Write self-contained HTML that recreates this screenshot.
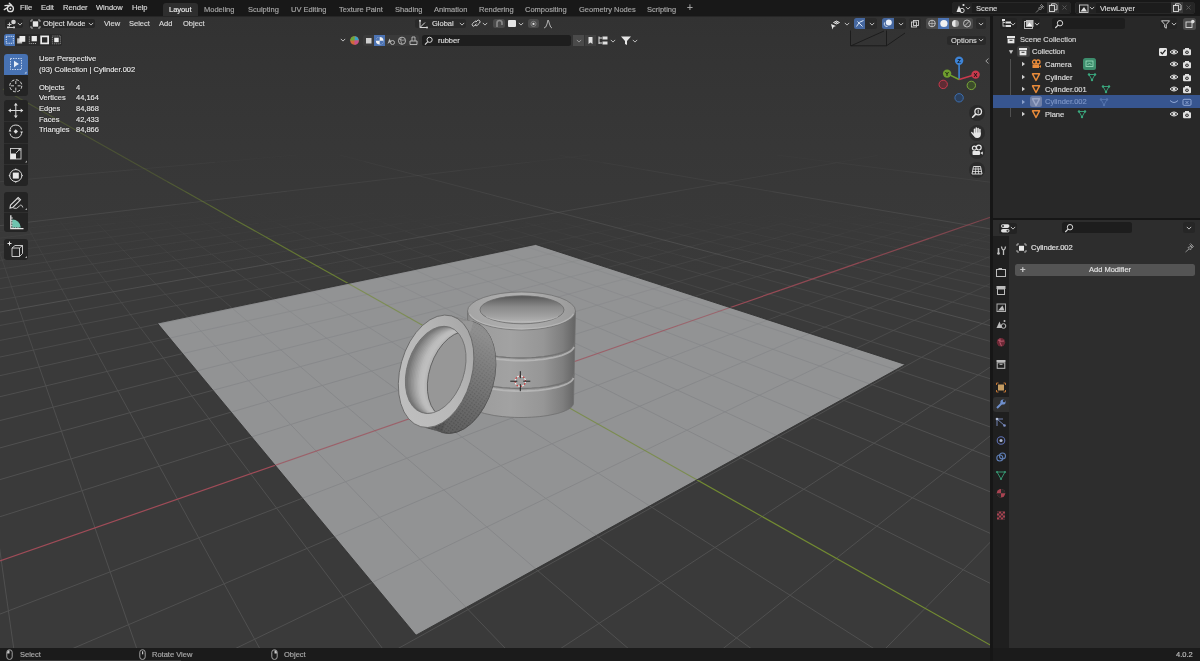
<!DOCTYPE html>
<html><head><meta charset="utf-8">
<style>
*{margin:0;padding:0;box-sizing:border-box}
html,body{width:1200px;height:661px;overflow:hidden;background:#161616;font-family:"Liberation Sans",sans-serif;color:#d6d6d6}
.a{position:absolute}
.t{position:absolute;font-size:7.5px;line-height:10px;white-space:nowrap;-webkit-text-stroke:0.18px currentColor;will-change:transform}
#topbar{left:0;top:0;width:1200px;height:15px;background:#181818}
#vp{left:0;top:15px;width:990px;height:633px;background:linear-gradient(#323232 0px,#343434 50px,#373737 130px,#3a3a3a 260px);overflow:hidden}
#outl{left:993px;top:15px;width:207px;height:203px;background:#282828}
#props{left:993px;top:220px;width:207px;height:428px;background:#2b2b2b}
#status{left:0;top:648px;width:1200px;height:13px;background:#181818}
</style></head><body>
<div class="a" id="vp">
<svg width="990" height="633" viewBox="0 15 990 633" style="position:absolute;left:0;top:0">
<defs><clipPath id="pc"><polygon points="157.3,323.1 535.6,244.4 905.4,364.5 416.0,635.2"/></clipPath></defs>
<g stroke-width="1" fill="none">
<path d="M25.2 222.6L19.6 212.5M60.0 221.3L54.3 213.7M96.8 222.6L87.1 212.5M131.1 221.2L122.3 213.7M168.5 222.6L157.9 214.9M202.1 221.2L190.2 213.6M278.4 223.9L258.1 213.6M311.5 222.5L294.7 214.8M350.4 223.9L326.0 213.6M382.9 222.5L363.0 214.8M422.4 223.8L393.7 213.6M454.3 222.5L431.2 214.8M494.2 223.8L461.5 213.6M525.5 222.5L499.4 214.8M566.0 223.8L529.1 213.6M637.8 223.8L596.7 213.6M667.9 222.4L635.6 214.8M709.4 223.8L664.3 213.6M739.0 222.4L703.6 214.8M781.0 223.8L731.7 213.5M810.0 222.4L771.5 214.8M852.6 223.7L799.2 213.5M881.0 222.4L839.4 214.7M924.0 223.7L866.5 213.5M995.4 223.7L933.8 213.5M1006.3 219.7L975.0 214.7M924.0 223.7L954.3 214.1M881.0 222.4L907.2 214.7M831.2 223.1L866.5 213.5M781.0 223.8L819.2 214.1M739.0 222.4L771.5 214.8M688.6 223.1L731.7 213.5M637.8 223.8L683.9 214.2M596.8 222.5L635.6 214.8M545.7 223.1L596.7 213.6M454.3 222.5L499.4 214.8M402.6 223.2L461.5 213.6M363.4 221.8L412.4 214.2M311.5 222.5L375.2 213.0M259.1 223.2L326.0 213.6M221.0 221.9L276.4 214.2M168.5 222.6L240.0 213.0M115.5 223.2L190.2 213.6M78.4 221.9L140.0 214.3M-11.2 221.3L54.3 213.7M-12.9 216.1L3.5 214.3" stroke="#505050" stroke-opacity="0.08"/>
<path d="M-7.3 232.5L-10.2 224.0M29.8 231.0L25.2 222.6M68.5 232.5L60.0 221.3M104.9 231.0L96.8 222.6M144.2 232.5L131.1 221.2M180.0 231.0L168.5 222.6M219.8 232.5L202.1 221.2M295.4 232.4L278.4 223.9M329.9 230.9L311.5 222.5M370.8 232.4L350.4 223.9M404.7 230.9L382.9 222.5M446.2 232.4L422.4 223.8M488.4 233.9L454.3 222.5M521.6 232.4L494.2 223.8M564.3 233.9L525.5 222.5M596.8 232.3L566.0 223.8M672.0 232.3L637.8 223.8M715.9 233.8L667.9 222.4M747.1 232.3L709.4 223.8M791.6 233.8L739.0 222.4M822.1 232.3L781.0 223.8M867.2 233.8L810.0 222.4M897.1 232.3L852.6 223.7M942.7 233.7L881.0 222.4M972.0 232.2L924.0 223.7M1012.0 226.5L995.4 223.7M995.0 233.0L1000.8 230.7M897.1 232.3L924.0 223.7M844.6 233.0L881.0 222.4M791.6 233.8L831.2 223.1M747.1 232.3L781.0 223.8M693.9 233.1L739.0 222.4M650.3 231.6L688.6 223.1M596.8 232.3L637.8 223.8M542.9 233.1L596.8 222.5M500.4 231.6L545.7 223.1M391.6 233.2L454.3 222.5M350.3 231.7L402.6 223.2M295.4 232.4L363.4 221.8M240.0 233.2L311.5 222.5M199.8 231.7L259.1 223.2M144.2 232.5L221.0 221.9M104.9 231.0L168.5 222.6M49.1 231.8L115.5 223.2M-7.3 232.5L78.4 221.9" stroke="#505050" stroke-opacity="0.17"/>
<path d="M-4.0 242.0L-7.3 232.5M36.7 243.6L29.8 231.0M75.6 241.9L68.5 232.5M117.0 243.6L104.9 231.0M155.2 241.9L144.2 232.5M197.2 243.6L180.0 231.0M234.6 241.9L219.8 232.5M314.0 241.9L295.4 232.4M357.3 243.5L329.9 230.9M393.3 241.8L370.8 232.4M437.3 243.5L404.7 230.9M472.5 241.8L446.2 232.4M517.1 243.5L488.4 233.9M551.7 241.8L521.6 232.4M596.9 243.4L564.3 233.9M642.8 245.1L596.8 232.3M723.2 245.1L672.0 232.3M756.2 243.4L715.9 233.8M803.4 245.0L747.1 232.3M835.7 243.3L791.6 233.8M883.6 245.0L822.1 232.3M915.2 243.3L867.2 233.8M963.7 245.0L897.1 232.3M994.5 243.3L942.7 233.7M1006.6 238.4L972.0 232.2M963.7 245.0L995.0 233.0M859.5 244.2L897.1 232.3M812.1 242.5L844.6 233.0M756.2 243.4L791.6 233.8M699.8 244.2L747.1 232.3M653.6 242.6L693.9 233.1M596.9 243.4L650.3 231.6M539.7 244.3L596.8 232.3M494.7 242.6L542.9 233.1M437.3 243.5L500.4 231.6M335.6 242.7L391.6 233.2M277.3 243.5L350.3 231.7M234.6 241.9L295.4 232.4M176.1 242.7L240.0 233.2M117.0 243.6L199.8 231.7M75.6 241.9L144.2 232.5M16.3 242.8L104.9 231.0M-24.1 241.2L49.1 231.8M-25.7 234.8L-7.3 232.5" stroke="#505050" stroke-opacity="0.25"/>
<path d="M0.9 256.2L-4.0 242.0M42.6 254.3L36.7 243.6M86.3 256.1L75.6 241.9M127.2 254.2L117.0 243.6M171.7 256.1L155.2 241.9M211.7 254.2L197.2 243.6M256.9 256.1L234.6 241.9M342.1 256.0L314.0 241.9M380.5 254.1L357.3 243.5M427.1 256.0L393.3 241.8M464.7 254.1L437.3 243.5M512.1 256.0L472.5 241.8M548.9 254.1L517.1 243.5M597.0 255.9L551.7 241.8M633.0 254.0L596.9 243.4M681.7 255.9L642.8 245.1M766.4 255.8L723.2 245.1M816.8 257.7L756.2 243.4M851.0 255.8L803.4 245.0M902.1 257.7L835.7 243.3M935.5 255.8L883.6 245.0M987.3 257.6L915.2 243.3M1000.5 252.0L963.7 245.0M1013.0 246.7L994.5 243.3M994.0 254.8L1000.5 252.0M935.5 255.8L963.7 245.0M825.8 254.9L859.5 244.2M766.4 255.8L812.1 242.5M706.4 256.8L756.2 243.4M657.2 254.9L699.8 244.2M597.0 255.9L653.6 242.6M536.1 256.9L596.9 243.4M488.3 255.0L539.7 244.3M427.1 256.0L494.7 242.6M380.5 254.1L437.3 243.5M256.9 256.1L335.6 242.7M211.7 254.2L277.3 243.5M149.4 255.2L234.6 241.9M86.3 256.1L176.1 242.7M42.6 254.3L117.0 243.6M-20.7 255.2L75.6 241.9M-22.5 248.0L16.3 242.8" stroke="#505050" stroke-opacity="0.33"/>
<path d="M5.1 268.3L0.9 256.2M51.5 270.4L42.6 254.3M95.5 268.2L86.3 256.1M142.7 270.4L127.2 254.2M185.7 268.2L171.7 256.1M233.8 270.3L211.7 254.2M275.9 268.1L256.9 256.1M365.9 268.1L342.1 256.0M415.6 270.2L380.5 254.1M455.9 268.0L427.1 256.0M506.4 270.2L464.7 254.1M545.7 268.0L512.1 256.0M597.0 270.1L548.9 254.1M635.5 267.9L597.0 255.9M687.6 270.1L633.0 254.0M725.1 267.9L681.7 255.9M814.6 267.8L766.4 255.8M868.4 270.0L816.8 257.7M904.1 267.8L851.0 255.8M958.6 269.9L902.1 257.7M993.4 267.8L935.5 255.8M1007.0 261.6L987.3 257.6M958.6 269.9L994.0 254.8M895.6 271.0L935.5 255.8M778.0 270.0L825.8 254.9M714.0 271.1L766.4 255.8M661.4 269.0L706.4 256.8M597.0 270.1L657.2 254.9M545.7 268.0L597.0 255.9M481.0 269.1L536.1 256.9M415.6 270.2L488.3 255.0M365.9 268.1L427.1 256.0M300.2 269.2L380.5 254.1M185.7 268.2L256.9 256.1M119.0 269.3L211.7 254.2M51.5 270.4L149.4 255.2M5.1 268.3L86.3 256.1M-18.8 263.1L42.6 254.3" stroke="#505050" stroke-opacity="0.42"/>
<path d="M11.5 286.8L5.1 268.3M59.1 284.3L51.5 270.4M109.4 286.7L95.5 268.2M155.9 284.2L142.7 270.4M207.2 286.6L185.7 268.2M252.7 284.1L233.8 270.3M304.9 286.6L275.9 268.1M402.4 286.5L365.9 268.1M445.7 284.0L415.6 270.2M499.8 286.4L455.9 268.0M542.1 283.9L506.4 270.2M597.1 286.4L545.7 268.0M638.3 283.9L597.0 270.1M694.3 286.3L635.5 267.9M734.5 283.8L687.6 270.1M791.4 286.3L725.1 267.9M888.3 286.2L814.6 267.8M926.3 283.7L868.4 270.0M985.1 286.1L904.1 267.8M1000.1 278.9L958.6 269.9M1014.2 272.1L993.4 267.8M985.1 286.1L1000.1 278.9M917.6 287.4L958.6 269.9M859.2 285.0L895.6 271.0M734.5 283.8L778.0 270.0M666.2 285.1L714.0 271.1M597.1 286.4L661.4 269.0M542.1 283.9L597.0 270.1M472.6 285.2L545.7 268.0M402.4 286.5L481.0 269.1M349.3 284.1L415.6 270.2M278.6 285.3L365.9 268.1M207.2 286.6L300.2 269.2M84.1 285.5L185.7 268.2M34.3 283.0L119.0 269.3M-14.5 280.7L51.5 270.4M-16.7 271.5L5.1 268.3" stroke="#505050" stroke-opacity="0.50"/>
<path d="M17.1 302.8L11.5 286.8M70.9 305.6L59.1 284.3M121.5 302.7L109.4 286.7M176.4 305.5L155.9 284.2M225.8 302.6L207.2 286.6M281.8 305.5L252.7 284.1M330.0 302.6L304.9 286.6M434.0 302.5L402.4 286.5M492.2 305.3L445.7 284.0M537.9 302.4L499.8 286.4M597.2 305.2L542.1 283.9M641.7 302.3L597.1 286.4M702.1 305.1L638.3 283.9M745.3 302.2L694.3 286.3M806.8 305.1L734.5 283.8M848.8 302.2L791.4 286.3M952.1 302.1L888.3 286.2M1015.8 304.9L926.3 283.7M1007.5 291.2L985.1 286.1M952.1 302.1L985.1 286.1M879.9 303.6L917.6 287.4M806.8 305.1L859.2 285.0M671.7 303.7L734.5 283.8M597.2 305.2L666.2 285.1M537.9 302.4L597.1 286.4M463.0 303.9L542.1 283.9M387.1 305.4L472.6 285.2M330.0 302.6L402.4 286.5M253.7 304.0L349.3 284.1M198.2 301.2L278.6 285.3M121.5 302.7L207.2 286.6M-9.4 301.4L84.1 285.5M-12.1 290.6L34.3 283.0" stroke="#505050" stroke-opacity="0.58"/>
<path d="M25.7 327.8L17.1 302.8M81.2 324.4L70.9 305.6M140.4 327.7L121.5 302.7M194.4 324.3L176.4 305.5M254.9 327.6L225.8 302.6M307.4 324.2L281.8 305.5M369.2 327.5L330.0 302.6M483.4 327.4L434.0 302.5M533.0 324.0L492.2 305.3M597.4 327.3L537.9 302.4M645.5 323.9L597.2 305.2M711.2 327.2L641.7 302.3M757.9 323.8L702.1 305.1M824.8 327.1L745.3 302.2M870.1 323.7L806.8 305.1M938.3 327.0L848.8 302.2M1025.0 320.2L952.1 302.1M982.2 323.6L1007.8 309.3M904.0 325.3L952.1 302.1M824.8 327.1L879.9 303.6M757.9 323.8L806.8 305.1M597.4 327.3L671.7 303.7M533.0 324.0L597.2 305.2M451.6 325.7L537.9 302.4M389.3 322.4L463.0 303.9M307.4 324.2L387.1 305.4M224.5 325.9L330.0 302.6M164.7 322.6L253.7 304.0M81.2 324.4L198.2 301.2M-3.4 326.1L121.5 302.7M-34.8 305.7L-9.4 301.4" stroke="#505050" stroke-opacity="0.67"/>
<path d="M33.4 350.1L25.7 327.8M93.1 346.0L81.2 324.4M157.2 349.9L140.4 327.7M215.2 345.9L194.4 324.3M280.7 349.8L254.9 327.6M347.9 353.8L307.4 324.2M404.0 349.7L369.2 327.5M527.2 349.5L483.4 327.4M597.5 353.5L533.0 324.0M650.2 349.4L597.4 327.3M722.0 353.4L645.5 323.9M772.9 349.3L711.2 327.2M846.3 353.2L757.9 323.8M895.5 349.2L824.8 327.1M970.4 353.1L870.1 323.7M1017.9 349.0L938.3 327.0M932.7 351.1L982.2 323.6M846.3 353.2L904.0 325.3M772.9 349.3L824.8 327.1M685.8 351.4L757.9 323.8M527.2 349.5L597.4 327.3M438.2 351.6L533.0 324.0M370.3 347.7L451.6 325.7M280.7 349.8L389.3 322.4M189.8 351.9L307.4 324.2M124.9 348.0L224.5 325.9M33.4 350.1L164.7 322.6M-29.1 346.2L81.2 324.4M-31.2 331.3L-3.4 326.1" stroke="#505050" stroke-opacity="0.75"/>
<path d="M42.4 376.1L33.4 350.1M112.3 380.8L93.1 346.0M176.8 376.0L157.2 349.9M248.5 380.7L215.2 345.9M311.0 375.8L280.7 349.8M384.5 380.5L347.9 353.8M444.9 375.6L404.0 349.7M597.7 385.1L527.2 349.5M655.7 380.2L597.5 353.5M735.0 385.0L650.2 349.4M791.0 380.0L722.0 353.4M872.2 384.8L772.9 349.3M926.0 379.8L846.3 353.2M1009.0 384.6L895.5 349.2M1028.9 370.3L970.4 353.1M967.2 382.2L1008.5 355.1M885.3 377.5L932.7 351.1M791.0 380.0L846.3 353.2M695.1 382.5L772.9 349.3M616.9 377.8L685.8 351.4M422.0 382.9L527.2 349.5M347.5 378.1L438.2 351.6M248.5 380.7L370.3 347.7M148.0 383.2L280.7 349.8M77.1 378.5L189.8 351.9M-24.2 381.0L124.9 348.0M-26.8 362.6L33.4 350.1" stroke="#505050" stroke-opacity="0.83"/>
<path d="M57.2 418.8L42.4 376.1M129.9 412.7L112.3 380.8M209.0 418.6L176.8 376.0M279.1 412.5L248.5 380.7M360.4 418.3L311.0 375.8M428.0 412.3L384.5 380.5M511.6 418.1L444.9 375.6M662.5 417.9L597.7 385.1M725.0 411.9L655.7 380.2M813.1 417.7L735.0 385.0M904.0 423.6L791.0 380.0M963.4 417.4L872.2 384.8M1020.8 411.5L926.0 379.8M917.9 414.5L967.2 382.2M813.1 417.7L885.3 377.5M706.4 420.8L791.0 380.0M619.2 415.0L695.1 382.5M511.6 418.1L616.9 377.8M319.4 415.4L422.0 382.9M209.0 418.6L347.5 378.1M129.9 412.7L248.5 380.7M18.5 415.9L148.0 383.2M-21.2 401.7L77.1 378.5" stroke="#505050" stroke-opacity="0.92"/>
<path d="M17.1 672.3L-12.0 466.5M150.9 689.4L57.2 418.8M272.4 671.5L129.9 412.7M412.8 688.6L209.0 418.6M526.8 670.7L279.1 412.5M673.9 687.7L360.4 418.3M780.3 669.9L428.0 412.3M934.1 686.9L511.6 418.1M1012.4 594.6L662.5 417.9M1043.7 557.9L725.0 411.9M1025.3 506.6L813.1 417.7M1010.3 464.7L904.0 423.6M1034.7 442.9L963.4 417.4M856.2 678.3L1011.2 520.9M706.5 661.8L1009.6 420.4M526.8 670.7L917.9 414.5M341.7 679.9L813.1 417.7M204.9 663.3L706.4 420.8M17.1 672.3L619.2 415.0M-48.4 632.6L511.6 418.1M-52.3 533.3L319.4 415.4M-53.8 495.3L209.0 418.6M-14.1 451.7L129.9 412.7M-17.9 425.0L18.5 415.9" stroke="#505050" stroke-opacity="1.00"/>
<path d="M364.3 161.5L339.8 155.0M603.1 162.7L558.9 155.1M836.8 162.7L777.4 155.1M1005.3 156.2L995.3 155.2M836.8 162.7L877.7 155.4M529.8 162.1L590.2 154.8M215.2 162.3L295.9 155.0M-11.5 156.0L9.6 154.5" stroke="#565656" stroke-opacity="0.08"/>
<path d="M396.9 170.0L364.3 161.5M646.3 170.0L603.1 162.7M905.3 171.4L836.8 162.7M790.0 171.1L836.8 162.7M460.7 170.4L529.8 162.1M133.6 169.7L215.2 162.3" stroke="#565656" stroke-opacity="0.17"/>
<path d="M434.7 180.0L396.9 170.0M704.2 180.0L646.3 170.0M972.7 180.0L905.3 171.4M735.7 180.7L790.0 171.1M380.7 179.9L460.7 170.4M28.2 179.2L133.6 169.7" stroke="#565656" stroke-opacity="0.25"/>
<path d="M479.3 191.6L434.7 180.0M772.3 191.6L704.2 180.0M1010.0 184.7L972.7 180.0M679.8 190.7L735.7 180.7M287.1 191.2L380.7 179.9M-10.7 182.7L28.2 179.2" stroke="#565656" stroke-opacity="0.33"/>
<path d="M532.3 205.6L479.3 191.6M853.4 205.5L772.3 191.6M605.8 203.9L679.8 190.7M175.9 204.5L287.1 191.2" stroke="#565656" stroke-opacity="0.42"/>
<path d="M586.7 219.8L532.3 205.6M936.6 219.7L853.4 205.5M516.6 219.8L605.8 203.9M41.8 220.6L175.9 204.5" stroke="#565656" stroke-opacity="0.50"/>
<path d="M664.0 240.1L586.7 219.8M1000.8 230.7L936.6 219.7M407.1 239.4L516.6 219.8M-27.1 228.9L41.8 220.6" stroke="#565656" stroke-opacity="0.58"/>
<path d="M761.9 265.8L664.0 240.1M269.3 264.0L407.1 239.4" stroke="#565656" stroke-opacity="0.67"/>
<path d="M889.8 299.3L761.9 265.8M90.9 295.8L269.3 264.0" stroke="#565656" stroke-opacity="0.75"/>
<path d="M1008.1 330.4L889.8 299.3M-33.1 317.9L90.9 295.8" stroke="#565656" stroke-opacity="0.83"/>
</g>
<g stroke-width="1.2" fill="none">
<path d="M-50.5 578.3L678.2 325.5" stroke="#a04c58" stroke-opacity="1.00"/>
<path d="M678.2 325.5L780.4 290.1" stroke="#a04c58" stroke-opacity="0.92"/>
<path d="M780.4 290.1L859.4 262.6" stroke="#a04c58" stroke-opacity="0.83"/>
<path d="M859.4 262.6L929.3 238.4" stroke="#a04c58" stroke-opacity="0.75"/>
<path d="M929.3 238.4L979.3 221.0" stroke="#a04c58" stroke-opacity="0.67"/>
<path d="M979.3 221.0L1001.1 213.5" stroke="#a04c58" stroke-opacity="0.58"/>
<path d="M1033.1 669.1L420.3 324.1" stroke="#728a32" stroke-opacity="1.00"/>
<path d="M420.3 324.1L358.1 289.1" stroke="#728a32" stroke-opacity="0.92"/>
<path d="M358.1 289.1L309.9 261.9" stroke="#728a32" stroke-opacity="0.83"/>
<path d="M309.9 261.9L265.8 237.0" stroke="#728a32" stroke-opacity="0.75"/>
<path d="M265.8 237.0L235.3 219.9" stroke="#728a32" stroke-opacity="0.67"/>
<path d="M235.3 219.9L209.9 205.6" stroke="#728a32" stroke-opacity="0.58"/>
<path d="M209.9 205.6L185.1 191.6" stroke="#728a32" stroke-opacity="0.50"/>
<path d="M185.1 191.6L167.1 181.5" stroke="#728a32" stroke-opacity="0.42"/>
<path d="M167.1 181.5L2.8 89.0" stroke="#728a32" stroke-opacity="0.33"/>
</g>
<polygon points="157.3,323.1 535.6,244.4 905.4,364.5 416.0,635.2" fill="#929394"/>
<g stroke-width="1" fill="none" clip-path="url(#pc)">
<path d="M25.2 222.6L19.6 212.5M60.0 221.3L54.3 213.7M96.8 222.6L87.1 212.5M131.1 221.2L122.3 213.7M168.5 222.6L157.9 214.9M202.1 221.2L190.2 213.6M278.4 223.9L258.1 213.6M311.5 222.5L294.7 214.8M350.4 223.9L326.0 213.6M382.9 222.5L363.0 214.8M422.4 223.8L393.7 213.6M454.3 222.5L431.2 214.8M494.2 223.8L461.5 213.6M525.5 222.5L499.4 214.8M566.0 223.8L529.1 213.6M637.8 223.8L596.7 213.6M667.9 222.4L635.6 214.8M709.4 223.8L664.3 213.6M739.0 222.4L703.6 214.8M781.0 223.8L731.7 213.5M810.0 222.4L771.5 214.8M852.6 223.7L799.2 213.5M881.0 222.4L839.4 214.7M924.0 223.7L866.5 213.5M995.4 223.7L933.8 213.5M1006.3 219.7L975.0 214.7M924.0 223.7L954.3 214.1M881.0 222.4L907.2 214.7M831.2 223.1L866.5 213.5M781.0 223.8L819.2 214.1M739.0 222.4L771.5 214.8M688.6 223.1L731.7 213.5M637.8 223.8L683.9 214.2M596.8 222.5L635.6 214.8M545.7 223.1L596.7 213.6M454.3 222.5L499.4 214.8M402.6 223.2L461.5 213.6M363.4 221.8L412.4 214.2M311.5 222.5L375.2 213.0M259.1 223.2L326.0 213.6M221.0 221.9L276.4 214.2M168.5 222.6L240.0 213.0M115.5 223.2L190.2 213.6M78.4 221.9L140.0 214.3M-11.2 221.3L54.3 213.7M-12.9 216.1L3.5 214.3" stroke="#868789" stroke-opacity="0.08"/>
<path d="M-7.3 232.5L-10.2 224.0M29.8 231.0L25.2 222.6M68.5 232.5L60.0 221.3M104.9 231.0L96.8 222.6M144.2 232.5L131.1 221.2M180.0 231.0L168.5 222.6M219.8 232.5L202.1 221.2M295.4 232.4L278.4 223.9M329.9 230.9L311.5 222.5M370.8 232.4L350.4 223.9M404.7 230.9L382.9 222.5M446.2 232.4L422.4 223.8M488.4 233.9L454.3 222.5M521.6 232.4L494.2 223.8M564.3 233.9L525.5 222.5M596.8 232.3L566.0 223.8M672.0 232.3L637.8 223.8M715.9 233.8L667.9 222.4M747.1 232.3L709.4 223.8M791.6 233.8L739.0 222.4M822.1 232.3L781.0 223.8M867.2 233.8L810.0 222.4M897.1 232.3L852.6 223.7M942.7 233.7L881.0 222.4M972.0 232.2L924.0 223.7M1012.0 226.5L995.4 223.7M995.0 233.0L1000.8 230.7M897.1 232.3L924.0 223.7M844.6 233.0L881.0 222.4M791.6 233.8L831.2 223.1M747.1 232.3L781.0 223.8M693.9 233.1L739.0 222.4M650.3 231.6L688.6 223.1M596.8 232.3L637.8 223.8M542.9 233.1L596.8 222.5M500.4 231.6L545.7 223.1M391.6 233.2L454.3 222.5M350.3 231.7L402.6 223.2M295.4 232.4L363.4 221.8M240.0 233.2L311.5 222.5M199.8 231.7L259.1 223.2M144.2 232.5L221.0 221.9M104.9 231.0L168.5 222.6M49.1 231.8L115.5 223.2M-7.3 232.5L78.4 221.9" stroke="#868789" stroke-opacity="0.17"/>
<path d="M-4.0 242.0L-7.3 232.5M36.7 243.6L29.8 231.0M75.6 241.9L68.5 232.5M117.0 243.6L104.9 231.0M155.2 241.9L144.2 232.5M197.2 243.6L180.0 231.0M234.6 241.9L219.8 232.5M314.0 241.9L295.4 232.4M357.3 243.5L329.9 230.9M393.3 241.8L370.8 232.4M437.3 243.5L404.7 230.9M472.5 241.8L446.2 232.4M517.1 243.5L488.4 233.9M551.7 241.8L521.6 232.4M596.9 243.4L564.3 233.9M642.8 245.1L596.8 232.3M723.2 245.1L672.0 232.3M756.2 243.4L715.9 233.8M803.4 245.0L747.1 232.3M835.7 243.3L791.6 233.8M883.6 245.0L822.1 232.3M915.2 243.3L867.2 233.8M963.7 245.0L897.1 232.3M994.5 243.3L942.7 233.7M1006.6 238.4L972.0 232.2M963.7 245.0L995.0 233.0M859.5 244.2L897.1 232.3M812.1 242.5L844.6 233.0M756.2 243.4L791.6 233.8M699.8 244.2L747.1 232.3M653.6 242.6L693.9 233.1M596.9 243.4L650.3 231.6M539.7 244.3L596.8 232.3M494.7 242.6L542.9 233.1M437.3 243.5L500.4 231.6M335.6 242.7L391.6 233.2M277.3 243.5L350.3 231.7M234.6 241.9L295.4 232.4M176.1 242.7L240.0 233.2M117.0 243.6L199.8 231.7M75.6 241.9L144.2 232.5M16.3 242.8L104.9 231.0M-24.1 241.2L49.1 231.8M-25.7 234.8L-7.3 232.5" stroke="#868789" stroke-opacity="0.25"/>
<path d="M0.9 256.2L-4.0 242.0M42.6 254.3L36.7 243.6M86.3 256.1L75.6 241.9M127.2 254.2L117.0 243.6M171.7 256.1L155.2 241.9M211.7 254.2L197.2 243.6M256.9 256.1L234.6 241.9M342.1 256.0L314.0 241.9M380.5 254.1L357.3 243.5M427.1 256.0L393.3 241.8M464.7 254.1L437.3 243.5M512.1 256.0L472.5 241.8M548.9 254.1L517.1 243.5M597.0 255.9L551.7 241.8M633.0 254.0L596.9 243.4M681.7 255.9L642.8 245.1M766.4 255.8L723.2 245.1M816.8 257.7L756.2 243.4M851.0 255.8L803.4 245.0M902.1 257.7L835.7 243.3M935.5 255.8L883.6 245.0M987.3 257.6L915.2 243.3M1000.5 252.0L963.7 245.0M1013.0 246.7L994.5 243.3M994.0 254.8L1000.5 252.0M935.5 255.8L963.7 245.0M825.8 254.9L859.5 244.2M766.4 255.8L812.1 242.5M706.4 256.8L756.2 243.4M657.2 254.9L699.8 244.2M597.0 255.9L653.6 242.6M536.1 256.9L596.9 243.4M488.3 255.0L539.7 244.3M427.1 256.0L494.7 242.6M380.5 254.1L437.3 243.5M256.9 256.1L335.6 242.7M211.7 254.2L277.3 243.5M149.4 255.2L234.6 241.9M86.3 256.1L176.1 242.7M42.6 254.3L117.0 243.6M-20.7 255.2L75.6 241.9M-22.5 248.0L16.3 242.8" stroke="#868789" stroke-opacity="0.33"/>
<path d="M5.1 268.3L0.9 256.2M51.5 270.4L42.6 254.3M95.5 268.2L86.3 256.1M142.7 270.4L127.2 254.2M185.7 268.2L171.7 256.1M233.8 270.3L211.7 254.2M275.9 268.1L256.9 256.1M365.9 268.1L342.1 256.0M415.6 270.2L380.5 254.1M455.9 268.0L427.1 256.0M506.4 270.2L464.7 254.1M545.7 268.0L512.1 256.0M597.0 270.1L548.9 254.1M635.5 267.9L597.0 255.9M687.6 270.1L633.0 254.0M725.1 267.9L681.7 255.9M814.6 267.8L766.4 255.8M868.4 270.0L816.8 257.7M904.1 267.8L851.0 255.8M958.6 269.9L902.1 257.7M993.4 267.8L935.5 255.8M1007.0 261.6L987.3 257.6M958.6 269.9L994.0 254.8M895.6 271.0L935.5 255.8M778.0 270.0L825.8 254.9M714.0 271.1L766.4 255.8M661.4 269.0L706.4 256.8M597.0 270.1L657.2 254.9M545.7 268.0L597.0 255.9M481.0 269.1L536.1 256.9M415.6 270.2L488.3 255.0M365.9 268.1L427.1 256.0M300.2 269.2L380.5 254.1M185.7 268.2L256.9 256.1M119.0 269.3L211.7 254.2M51.5 270.4L149.4 255.2M5.1 268.3L86.3 256.1M-18.8 263.1L42.6 254.3" stroke="#868789" stroke-opacity="0.42"/>
<path d="M11.5 286.8L5.1 268.3M59.1 284.3L51.5 270.4M109.4 286.7L95.5 268.2M155.9 284.2L142.7 270.4M207.2 286.6L185.7 268.2M252.7 284.1L233.8 270.3M304.9 286.6L275.9 268.1M402.4 286.5L365.9 268.1M445.7 284.0L415.6 270.2M499.8 286.4L455.9 268.0M542.1 283.9L506.4 270.2M597.1 286.4L545.7 268.0M638.3 283.9L597.0 270.1M694.3 286.3L635.5 267.9M734.5 283.8L687.6 270.1M791.4 286.3L725.1 267.9M888.3 286.2L814.6 267.8M926.3 283.7L868.4 270.0M985.1 286.1L904.1 267.8M1000.1 278.9L958.6 269.9M1014.2 272.1L993.4 267.8M985.1 286.1L1000.1 278.9M917.6 287.4L958.6 269.9M859.2 285.0L895.6 271.0M734.5 283.8L778.0 270.0M666.2 285.1L714.0 271.1M597.1 286.4L661.4 269.0M542.1 283.9L597.0 270.1M472.6 285.2L545.7 268.0M402.4 286.5L481.0 269.1M349.3 284.1L415.6 270.2M278.6 285.3L365.9 268.1M207.2 286.6L300.2 269.2M84.1 285.5L185.7 268.2M34.3 283.0L119.0 269.3M-14.5 280.7L51.5 270.4M-16.7 271.5L5.1 268.3" stroke="#868789" stroke-opacity="0.50"/>
<path d="M17.1 302.8L11.5 286.8M70.9 305.6L59.1 284.3M121.5 302.7L109.4 286.7M176.4 305.5L155.9 284.2M225.8 302.6L207.2 286.6M281.8 305.5L252.7 284.1M330.0 302.6L304.9 286.6M434.0 302.5L402.4 286.5M492.2 305.3L445.7 284.0M537.9 302.4L499.8 286.4M597.2 305.2L542.1 283.9M641.7 302.3L597.1 286.4M702.1 305.1L638.3 283.9M745.3 302.2L694.3 286.3M806.8 305.1L734.5 283.8M848.8 302.2L791.4 286.3M952.1 302.1L888.3 286.2M1015.8 304.9L926.3 283.7M1007.5 291.2L985.1 286.1M952.1 302.1L985.1 286.1M879.9 303.6L917.6 287.4M806.8 305.1L859.2 285.0M671.7 303.7L734.5 283.8M597.2 305.2L666.2 285.1M537.9 302.4L597.1 286.4M463.0 303.9L542.1 283.9M387.1 305.4L472.6 285.2M330.0 302.6L402.4 286.5M253.7 304.0L349.3 284.1M198.2 301.2L278.6 285.3M121.5 302.7L207.2 286.6M-9.4 301.4L84.1 285.5M-12.1 290.6L34.3 283.0" stroke="#868789" stroke-opacity="0.58"/>
<path d="M25.7 327.8L17.1 302.8M81.2 324.4L70.9 305.6M140.4 327.7L121.5 302.7M194.4 324.3L176.4 305.5M254.9 327.6L225.8 302.6M307.4 324.2L281.8 305.5M369.2 327.5L330.0 302.6M483.4 327.4L434.0 302.5M533.0 324.0L492.2 305.3M597.4 327.3L537.9 302.4M645.5 323.9L597.2 305.2M711.2 327.2L641.7 302.3M757.9 323.8L702.1 305.1M824.8 327.1L745.3 302.2M870.1 323.7L806.8 305.1M938.3 327.0L848.8 302.2M1025.0 320.2L952.1 302.1M982.2 323.6L1007.8 309.3M904.0 325.3L952.1 302.1M824.8 327.1L879.9 303.6M757.9 323.8L806.8 305.1M597.4 327.3L671.7 303.7M533.0 324.0L597.2 305.2M451.6 325.7L537.9 302.4M389.3 322.4L463.0 303.9M307.4 324.2L387.1 305.4M224.5 325.9L330.0 302.6M164.7 322.6L253.7 304.0M81.2 324.4L198.2 301.2M-3.4 326.1L121.5 302.7M-34.8 305.7L-9.4 301.4" stroke="#868789" stroke-opacity="0.67"/>
<path d="M33.4 350.1L25.7 327.8M93.1 346.0L81.2 324.4M157.2 349.9L140.4 327.7M215.2 345.9L194.4 324.3M280.7 349.8L254.9 327.6M347.9 353.8L307.4 324.2M404.0 349.7L369.2 327.5M527.2 349.5L483.4 327.4M597.5 353.5L533.0 324.0M650.2 349.4L597.4 327.3M722.0 353.4L645.5 323.9M772.9 349.3L711.2 327.2M846.3 353.2L757.9 323.8M895.5 349.2L824.8 327.1M970.4 353.1L870.1 323.7M1017.9 349.0L938.3 327.0M932.7 351.1L982.2 323.6M846.3 353.2L904.0 325.3M772.9 349.3L824.8 327.1M685.8 351.4L757.9 323.8M527.2 349.5L597.4 327.3M438.2 351.6L533.0 324.0M370.3 347.7L451.6 325.7M280.7 349.8L389.3 322.4M189.8 351.9L307.4 324.2M124.9 348.0L224.5 325.9M33.4 350.1L164.7 322.6M-29.1 346.2L81.2 324.4M-31.2 331.3L-3.4 326.1" stroke="#868789" stroke-opacity="0.75"/>
<path d="M42.4 376.1L33.4 350.1M112.3 380.8L93.1 346.0M176.8 376.0L157.2 349.9M248.5 380.7L215.2 345.9M311.0 375.8L280.7 349.8M384.5 380.5L347.9 353.8M444.9 375.6L404.0 349.7M597.7 385.1L527.2 349.5M655.7 380.2L597.5 353.5M735.0 385.0L650.2 349.4M791.0 380.0L722.0 353.4M872.2 384.8L772.9 349.3M926.0 379.8L846.3 353.2M1009.0 384.6L895.5 349.2M1028.9 370.3L970.4 353.1M967.2 382.2L1008.5 355.1M885.3 377.5L932.7 351.1M791.0 380.0L846.3 353.2M695.1 382.5L772.9 349.3M616.9 377.8L685.8 351.4M422.0 382.9L527.2 349.5M347.5 378.1L438.2 351.6M248.5 380.7L370.3 347.7M148.0 383.2L280.7 349.8M77.1 378.5L189.8 351.9M-24.2 381.0L124.9 348.0M-26.8 362.6L33.4 350.1" stroke="#868789" stroke-opacity="0.83"/>
<path d="M57.2 418.8L42.4 376.1M129.9 412.7L112.3 380.8M209.0 418.6L176.8 376.0M279.1 412.5L248.5 380.7M360.4 418.3L311.0 375.8M428.0 412.3L384.5 380.5M511.6 418.1L444.9 375.6M662.5 417.9L597.7 385.1M725.0 411.9L655.7 380.2M813.1 417.7L735.0 385.0M904.0 423.6L791.0 380.0M963.4 417.4L872.2 384.8M1020.8 411.5L926.0 379.8M917.9 414.5L967.2 382.2M813.1 417.7L885.3 377.5M706.4 420.8L791.0 380.0M619.2 415.0L695.1 382.5M511.6 418.1L616.9 377.8M319.4 415.4L422.0 382.9M209.0 418.6L347.5 378.1M129.9 412.7L248.5 380.7M18.5 415.9L148.0 383.2M-21.2 401.7L77.1 378.5" stroke="#868789" stroke-opacity="0.92"/>
<path d="M17.1 672.3L-12.0 466.5M150.9 689.4L57.2 418.8M272.4 671.5L129.9 412.7M412.8 688.6L209.0 418.6M526.8 670.7L279.1 412.5M673.9 687.7L360.4 418.3M780.3 669.9L428.0 412.3M934.1 686.9L511.6 418.1M1012.4 594.6L662.5 417.9M1043.7 557.9L725.0 411.9M1025.3 506.6L813.1 417.7M1010.3 464.7L904.0 423.6M1034.7 442.9L963.4 417.4M856.2 678.3L1011.2 520.9M706.5 661.8L1009.6 420.4M526.8 670.7L917.9 414.5M341.7 679.9L813.1 417.7M204.9 663.3L706.4 420.8M17.1 672.3L619.2 415.0M-48.4 632.6L511.6 418.1M-52.3 533.3L319.4 415.4M-53.8 495.3L209.0 418.6M-14.1 451.7L129.9 412.7M-17.9 425.0L18.5 415.9" stroke="#868789" stroke-opacity="1.00"/>
<path d="M364.3 161.5L339.8 155.0M603.1 162.7L558.9 155.1M836.8 162.7L777.4 155.1M1005.3 156.2L995.3 155.2M836.8 162.7L877.7 155.4M529.8 162.1L590.2 154.8M215.2 162.3L295.9 155.0M-11.5 156.0L9.6 154.5" stroke="#868789" stroke-opacity="0.08"/>
<path d="M396.9 170.0L364.3 161.5M646.3 170.0L603.1 162.7M905.3 171.4L836.8 162.7M790.0 171.1L836.8 162.7M460.7 170.4L529.8 162.1M133.6 169.7L215.2 162.3" stroke="#868789" stroke-opacity="0.17"/>
<path d="M434.7 180.0L396.9 170.0M704.2 180.0L646.3 170.0M972.7 180.0L905.3 171.4M735.7 180.7L790.0 171.1M380.7 179.9L460.7 170.4M28.2 179.2L133.6 169.7" stroke="#868789" stroke-opacity="0.25"/>
<path d="M479.3 191.6L434.7 180.0M772.3 191.6L704.2 180.0M1010.0 184.7L972.7 180.0M679.8 190.7L735.7 180.7M287.1 191.2L380.7 179.9M-10.7 182.7L28.2 179.2" stroke="#868789" stroke-opacity="0.33"/>
<path d="M532.3 205.6L479.3 191.6M853.4 205.5L772.3 191.6M605.8 203.9L679.8 190.7M175.9 204.5L287.1 191.2" stroke="#868789" stroke-opacity="0.42"/>
<path d="M586.7 219.8L532.3 205.6M936.6 219.7L853.4 205.5M516.6 219.8L605.8 203.9M41.8 220.6L175.9 204.5" stroke="#868789" stroke-opacity="0.50"/>
<path d="M664.0 240.1L586.7 219.8M1000.8 230.7L936.6 219.7M407.1 239.4L516.6 219.8M-27.1 228.9L41.8 220.6" stroke="#868789" stroke-opacity="0.58"/>
<path d="M761.9 265.8L664.0 240.1M269.3 264.0L407.1 239.4" stroke="#868789" stroke-opacity="0.67"/>
<path d="M889.8 299.3L761.9 265.8M90.9 295.8L269.3 264.0" stroke="#868789" stroke-opacity="0.75"/>
<path d="M1008.1 330.4L889.8 299.3M-33.1 317.9L90.9 295.8" stroke="#868789" stroke-opacity="0.83"/>
</g>
<g stroke-width="1.1" fill="none" clip-path="url(#pc)" opacity="0.7">
<path d="M-50.5 578.3L678.2 325.5" stroke="#a04c58" stroke-opacity="1.00"/>
<path d="M678.2 325.5L780.4 290.1" stroke="#a04c58" stroke-opacity="0.92"/>
<path d="M780.4 290.1L859.4 262.6" stroke="#a04c58" stroke-opacity="0.83"/>
<path d="M859.4 262.6L929.3 238.4" stroke="#a04c58" stroke-opacity="0.75"/>
<path d="M929.3 238.4L979.3 221.0" stroke="#a04c58" stroke-opacity="0.67"/>
<path d="M979.3 221.0L1001.1 213.5" stroke="#a04c58" stroke-opacity="0.58"/>
<path d="M1033.1 669.1L420.3 324.1" stroke="#728a32" stroke-opacity="1.00"/>
<path d="M420.3 324.1L358.1 289.1" stroke="#728a32" stroke-opacity="0.92"/>
<path d="M358.1 289.1L309.9 261.9" stroke="#728a32" stroke-opacity="0.83"/>
<path d="M309.9 261.9L265.8 237.0" stroke="#728a32" stroke-opacity="0.75"/>
<path d="M265.8 237.0L235.3 219.9" stroke="#728a32" stroke-opacity="0.67"/>
<path d="M235.3 219.9L209.9 205.6" stroke="#728a32" stroke-opacity="0.58"/>
<path d="M209.9 205.6L185.1 191.6" stroke="#728a32" stroke-opacity="0.50"/>
<path d="M185.1 191.6L167.1 181.5" stroke="#728a32" stroke-opacity="0.42"/>
<path d="M167.1 181.5L2.8 89.0" stroke="#728a32" stroke-opacity="0.33"/>
</g>
<polygon points="157.3,323.1 535.6,244.4 905.4,364.5 416.0,635.2" fill="none" stroke="#333" stroke-width="0.9"/>
<defs>
<linearGradient id="side" x1="467" y1="0" x2="576" y2="0" gradientUnits="userSpaceOnUse">
<stop offset="0" stop-color="#888"/><stop offset="0.08" stop-color="#9c9c9c"/><stop offset="0.4" stop-color="#a2a2a2"/><stop offset="0.7" stop-color="#969696"/><stop offset="0.88" stop-color="#7e7e7e"/><stop offset="1" stop-color="#626262"/></linearGradient>
<linearGradient id="hole" x1="0" y1="295" x2="0" y2="325" gradientUnits="userSpaceOnUse">
<stop offset="0" stop-color="#505050"/><stop offset="0.15" stop-color="#686868"/><stop offset="0.4" stop-color="#8a8a8a"/><stop offset="0.72" stop-color="#a2a2a2"/><stop offset="0.9" stop-color="#b2b2b2"/><stop offset="1" stop-color="#9a9a9a"/></linearGradient>
<linearGradient id="rimg" x1="467" y1="0" x2="576" y2="0" gradientUnits="userSpaceOnUse">
<stop offset="0" stop-color="#a4a4a4"/><stop offset="0.5" stop-color="#b0b0b0"/><stop offset="1" stop-color="#9a9a9a"/></linearGradient>
<pattern id="tread" width="3" height="3" patternUnits="userSpaceOnUse" patternTransform="rotate(20)">
<rect width="3" height="3" fill="#6e6e6e"/><rect x="0" y="0" width="1.4" height="1.4" fill="#535353"/></pattern>
<linearGradient id="treadshade" x1="470" y1="330" x2="450" y2="432" gradientUnits="userSpaceOnUse">
<stop offset="0" stop-color="#9a9a9a" stop-opacity="0.75"/><stop offset="0.45" stop-color="#888" stop-opacity="0.35"/><stop offset="1" stop-color="#333" stop-opacity="0.25"/></linearGradient>
<linearGradient id="cres" x1="404" y1="360" x2="432" y2="368" gradientUnits="userSpaceOnUse">
<stop offset="0" stop-color="#6a6a6a"/><stop offset="0.35" stop-color="#8e8e8e"/><stop offset="0.75" stop-color="#b9b9b9"/><stop offset="1" stop-color="#a5a5a5"/></linearGradient>
<linearGradient id="frim" x1="400" y1="400" x2="475" y2="335" gradientUnits="userSpaceOnUse">
<stop offset="0" stop-color="#bebebe"/><stop offset="0.5" stop-color="#b8b8b8"/><stop offset="1" stop-color="#a6a6a6"/></linearGradient>
</defs>
<path d="M467.5 311.0 L468.5 403.0 L468.7 404.2 L469.2 405.3 L470.0 406.5 L471.2 407.6 L472.7 408.7 L474.5 409.7 L476.6 410.7 L479.0 411.7 L481.7 412.6 L484.6 413.5 L487.8 414.2 L491.2 414.9 L494.8 415.6 L498.5 416.1 L502.4 416.6 L506.4 416.9 L510.5 417.2 L514.7 417.4 L518.9 417.5 L523.1 417.5 L527.3 417.4 L531.5 417.2 L535.6 416.9 L539.6 416.6 L543.5 416.1 L547.2 415.6 L550.8 414.9 L554.2 414.2 L557.4 413.5 L560.3 412.6 L563.0 411.7 L565.4 410.7 L567.5 409.7 L569.3 408.7 L570.8 407.6 L572.0 406.5 L572.8 405.3 L573.3 404.2 L573.5 403.0 L575.5 311.0Z" fill="url(#side)" stroke="#6e6e6e" stroke-width="0.8"/>
<path d="M467.7 343.0 L467.9 344.2 L468.4 345.4 L469.2 346.6 L470.4 347.8 L472.0 348.9 L473.8 350.0 L476.0 351.0 L478.4 352.0 L481.1 352.9 L484.1 353.8 L487.3 354.6 L490.7 355.3 L494.3 356.0 L498.2 356.6 L502.1 357.0 L506.2 357.4 L510.3 357.7 L514.6 357.9 L518.9 358.0 L523.1 358.0 L527.4 357.9 L531.7 357.7 L535.8 357.4 L539.9 357.0 L543.8 356.6 L547.6 356.0 L551.3 355.3 L554.7 354.6 L557.9 353.8 L560.9 352.9 L563.6 352.0 L566.0 351.0 L568.2 350.0 L570.0 348.9 L571.6 347.8 L572.8 346.6 L573.6 345.4 L574.1 344.2 L574.3 343.0" fill="none" stroke="#707070" stroke-width="1.3" opacity="0.9"/>
<path d="M467.9 347.0 L468.5 348.1 L469.3 349.2 L470.4 350.3 L471.8 351.4 L473.5 352.4 L475.5 353.4 L477.8 354.4 L480.2 355.3 L482.9 356.1 L485.9 356.9 L489.0 357.6 L492.3 358.2 L495.8 358.8 L499.4 359.3 L503.2 359.7 L507.0 360.1 L511.0 360.3 L515.0 360.5 L519.0 360.6 L523.0 360.6 L527.0 360.5 L531.0 360.3 L535.0 360.1 L538.8 359.7 L542.6 359.3 L546.2 358.8 L549.7 358.2 L553.0 357.6 L556.1 356.9 L559.1 356.1 L561.8 355.3 L564.2 354.4 L566.5 353.4 L568.5 352.4 L570.2 351.4 L571.6 350.3 L572.7 349.2 L573.5 348.1 L574.1 347.0" fill="none" stroke="#bcbcbc" stroke-width="1.8" opacity="0.8"/>
<path d="M468.2 374.0 L468.4 375.2 L468.9 376.3 L469.7 377.5 L470.9 378.6 L472.4 379.7 L474.2 380.7 L476.4 381.7 L478.8 382.7 L481.5 383.6 L484.4 384.5 L487.6 385.2 L491.0 385.9 L494.6 386.6 L498.4 387.1 L502.3 387.6 L506.3 387.9 L510.4 388.2 L514.6 388.4 L518.9 388.5 L523.1 388.5 L527.4 388.4 L531.6 388.2 L535.7 387.9 L539.7 387.6 L543.6 387.1 L547.4 386.6 L551.0 385.9 L554.4 385.2 L557.6 384.5 L560.5 383.6 L563.2 382.7 L565.6 381.7 L567.8 380.7 L569.6 379.7 L571.1 378.6 L572.3 377.5 L573.1 376.3 L573.6 375.2 L573.8 374.0" fill="none" stroke="#707070" stroke-width="1.3" opacity="0.9"/>
<path d="M468.4 378.0 L469.0 379.1 L469.8 380.1 L470.9 381.2 L472.3 382.2 L474.0 383.2 L475.9 384.2 L478.2 385.1 L480.6 385.9 L483.3 386.8 L486.2 387.5 L489.3 388.2 L492.6 388.8 L496.0 389.4 L499.6 389.9 L503.4 390.3 L507.2 390.6 L511.1 390.8 L515.0 391.0 L519.0 391.1 L523.0 391.1 L527.0 391.0 L530.9 390.8 L534.8 390.6 L538.6 390.3 L542.4 389.9 L546.0 389.4 L549.4 388.8 L552.7 388.2 L555.8 387.5 L558.7 386.8 L561.4 385.9 L563.8 385.1 L566.1 384.2 L568.0 383.2 L569.7 382.2 L571.1 381.2 L572.2 380.1 L573.0 379.1 L573.6 378.0" fill="none" stroke="#bcbcbc" stroke-width="1.8" opacity="0.8"/>
<ellipse cx="521.5" cy="311" rx="54" ry="19" fill="url(#rimg)" stroke="#6a6a6a" stroke-width="0.7"/>
<path d="M469.6 313.8 L470.4 315.1 L471.4 316.3 L472.6 317.5 L474.2 318.7 L475.9 319.8 L477.9 320.9 L480.2 322.0 L482.6 323.0 L485.3 323.9 L488.1 324.7 L491.2 325.5 L494.3 326.2 L497.7 326.9 L501.1 327.4 L504.7 327.9 L508.3 328.2 L512.0 328.5 L515.8 328.7 L519.6 328.8 L523.4 328.8 L527.2 328.7 L531.0 328.5 L534.7 328.2 L538.3 327.9 L541.9 327.4 L545.3 326.9 L548.7 326.2 L551.8 325.5 L554.9 324.7 L557.7 323.9 L560.4 323.0 L562.8 322.0 L565.1 320.9 L567.1 319.8 L568.8 318.7 L570.4 317.5 L571.6 316.3 L572.6 315.1 L573.4 313.8" fill="none" stroke="#bdbdbd" stroke-width="1.2" opacity="0.7"/>
<ellipse cx="522" cy="309.8" rx="42" ry="14" fill="url(#hole)" stroke="#6a6a6a" stroke-width="0.8"/>
<path d="M485.9 316.5 L487.0 317.1 L488.4 317.7 L490.1 318.3 L492.0 318.9 L494.1 319.4 L496.5 319.9 L499.0 320.4 L501.7 320.8 L504.6 321.1 L507.6 321.4 L510.6 321.6 L513.8 321.8 L517.1 321.9 L520.4 322.0 L523.6 322.0 L526.9 321.9 L530.2 321.8 L533.4 321.6 L536.4 321.4 L539.4 321.1 L542.3 320.8 L545.0 320.4 L547.5 319.9 L549.9 319.4 L552.0 318.9 L553.9 318.3 L555.6 317.7 L557.0 317.1 L558.1 316.5" fill="none" stroke="#c4c4c4" stroke-width="1" opacity="0.6"/>
<ellipse cx="458.1" cy="377.3" rx="35.8" ry="57.5" transform="rotate(15.6 458.1 377.3)" fill="url(#tread)" stroke="#4a4a4a" stroke-width="0.8"/>
<path d="M420.3 426.6 L442.3 432.6 L473.3 321.8 L451.3 315.8Z" fill="url(#tread)"/>
<ellipse cx="458.1" cy="377.3" rx="35.8" ry="57.5" transform="rotate(15.6 458.1 377.3)" fill="url(#treadshade)"/>
<path d="M420.3 426.6 L442.3 432.6 L473.3 321.8 L451.3 315.8Z" fill="url(#treadshade)"/>
<ellipse cx="436.1" cy="371.3" rx="35.8" ry="57.5" transform="rotate(15.6 436.1 371.3)" fill="url(#frim)" stroke="#646464" stroke-width="0.8"/>
<clipPath id="hc"><ellipse cx="435.7" cy="369.9" rx="28.4" ry="44.9" transform="rotate(18.0 435.7 369.9)" /></clipPath>
<ellipse cx="435.7" cy="369.9" rx="28.4" ry="44.9" transform="rotate(18.0 435.7 369.9)" fill="#767676"/>
<g clip-path="url(#hc)"><ellipse cx="436.8" cy="370.1" rx="28.4" ry="44.9" transform="rotate(18.0 436.8 370.1)" fill="#767676"/><ellipse cx="438.3" cy="370.5" rx="28.4" ry="44.9" transform="rotate(18.0 438.3 370.5)" fill="#7f7f7f"/><ellipse cx="439.7" cy="370.8" rx="28.4" ry="44.9" transform="rotate(18.0 439.7 370.8)" fill="#888888"/><ellipse cx="441.2" cy="371.2" rx="28.4" ry="44.9" transform="rotate(18.0 441.2 371.2)" fill="#919191"/><ellipse cx="442.7" cy="371.5" rx="28.4" ry="44.9" transform="rotate(18.0 442.7 371.5)" fill="#999999"/><ellipse cx="444.2" cy="371.8" rx="28.4" ry="44.9" transform="rotate(18.0 444.2 371.8)" fill="#a1a1a1"/><ellipse cx="445.6" cy="372.2" rx="28.4" ry="44.9" transform="rotate(18.0 445.6 372.2)" fill="#a9a9a9"/><ellipse cx="447.1" cy="372.5" rx="28.4" ry="44.9" transform="rotate(18.0 447.1 372.5)" fill="#b0b0b0"/><ellipse cx="448.6" cy="372.8" rx="28.4" ry="44.9" transform="rotate(18.0 448.6 372.8)" fill="#b8b8b8"/><ellipse cx="450.1" cy="373.2" rx="28.4" ry="44.9" transform="rotate(18.0 450.1 373.2)" fill="#bcbcbc"/><ellipse cx="451.5" cy="373.5" rx="28.4" ry="44.9" transform="rotate(18.0 451.5 373.5)" fill="#bebebe"/><ellipse cx="453.0" cy="373.8" rx="28.4" ry="44.9" transform="rotate(18.0 453.0 373.8)" fill="#bfbfbf"/><ellipse cx="454.5" cy="374.2" rx="28.4" ry="44.9" transform="rotate(18.0 454.5 374.2)" fill="#bbbbbb"/><ellipse cx="455.9" cy="374.5" rx="28.4" ry="44.9" transform="rotate(18.0 455.9 374.5)" fill="#b6b6b6"/><ellipse cx="457.7" cy="374.9" rx="28.4" ry="44.9" transform="rotate(18.0 457.7 374.9)" fill="#979797" stroke="#5a5a5a" stroke-width="0.8"/></g>
<ellipse cx="435.7" cy="369.9" rx="28.4" ry="44.9" transform="rotate(18.0 435.7 369.9)" fill="none" stroke="#6e6e6e" stroke-width="0.8"/>
<g transform="translate(520.3 381.2)"><circle r="5.2" fill="none" stroke="#f2f2f2" stroke-width="1.1" stroke-dasharray="2.2 1.9"/><circle r="5.2" fill="none" stroke="#d04040" stroke-width="1.1" stroke-dasharray="1.9 2.2" stroke-dashoffset="2.2"/><path d="M0 -10V-3M0 3V10M-10 0H-3M3 0H10" stroke="#111" stroke-width="0.9"/></g>
</svg>
</div>
<div class="a" style="left:0px;top:0px;width:1200px;height:15.5px;background:#181818;"></div>
<svg class="a" style="left:0px;top:0px;" width="16" height="16" viewBox="0 0 16 16"><circle cx="10.4" cy="8.7" r="3" fill="none" stroke="#e0e0e0" stroke-width="1.3"/><circle cx="10.4" cy="8.6" r="0.9" fill="#e8e8e8"/><path d="M5 5.6L11 5.1M9.3 3.2L11.6 5.3M4.3 9.6L7.6 7.5" stroke="#e0e0e0" stroke-width="1.4" stroke-linecap="round" fill="none"/></svg>
<div class="t" style="left:20px;top:3.2px;color:#d6d6d6;font-size:7.5px;">File</div>
<div class="t" style="left:40.8px;top:3.2px;color:#d6d6d6;font-size:7.5px;">Edit</div>
<div class="t" style="left:63.3px;top:3.2px;color:#d6d6d6;font-size:7.5px;">Render</div>
<div class="t" style="left:96.3px;top:3.2px;color:#d6d6d6;font-size:7.5px;">Window</div>
<div class="t" style="left:132px;top:3.2px;color:#d6d6d6;font-size:7.5px;">Help</div>
<div class="a" style="left:163px;top:3px;width:35px;height:12.5px;background:#2e2e2e;border-radius:3px 3px 0 0"></div>
<div class="t" style="left:168.5px;top:5.1px;color:#e8e8e8;font-size:7.5px;">Layout</div>
<div class="t" style="left:204px;top:5.1px;color:#a3a3a3;font-size:7.5px;">Modeling</div>
<div class="t" style="left:247.5px;top:5.1px;color:#a3a3a3;font-size:7.5px;">Sculpting</div>
<div class="t" style="left:291px;top:5.1px;color:#a3a3a3;font-size:7.5px;">UV Editing</div>
<div class="t" style="left:339px;top:5.1px;color:#a3a3a3;font-size:7.5px;">Texture Paint</div>
<div class="t" style="left:394.5px;top:5.1px;color:#a3a3a3;font-size:7.5px;">Shading</div>
<div class="t" style="left:433.8px;top:5.1px;color:#a3a3a3;font-size:7.5px;">Animation</div>
<div class="t" style="left:478.8px;top:5.1px;color:#a3a3a3;font-size:7.5px;">Rendering</div>
<div class="t" style="left:525px;top:5.1px;color:#a3a3a3;font-size:7.5px;">Compositing</div>
<div class="t" style="left:579px;top:5.1px;color:#a3a3a3;font-size:7.5px;">Geometry Nodes</div>
<div class="t" style="left:647px;top:5.1px;color:#a3a3a3;font-size:7.5px;">Scripting</div>
<div class="t" style="left:687px;top:3.4px;color:#a3a3a3;font-size:10px;">+</div>
<div class="a" style="left:951.5px;top:1.6px;width:119.70000000000005px;height:12.4px;background:#1c1c1c;border-radius:3px;box-shadow:inset 0 0 0 0.8px #2c2c2c"></div>
<div class="a" style="left:952.3px;top:2.4px;width:20px;height:10.8px;background:#232323;border-radius:2.5px 0 0 2.5px"></div>
<svg class="a" style="left:954.5px;top:3px;" width="12" height="10" viewBox="0 0 12 10"><path d="M1.5 9L4 2.5L6.5 9Z" fill="#e0e0e0"/><circle cx="7" cy="7.5" r="2.2" fill="none" stroke="#e0e0e0" stroke-width="0.9"/><circle cx="8.5" cy="2" r="1.1" fill="#e0e0e0"/></svg>
<svg class="a" style="left:965.0px;top:5.300000000000001px;" width="6" height="6" viewBox="0 0 6 6"><path d="M0.8 1.9L3 4.1L5.2 1.9" stroke="#bdbdbd" stroke-width="1" fill="none"/></svg>
<div class="t" style="left:975.8px;top:3.7px;color:#d4d4d4;font-size:7.5px;">Scene</div>
<div class="a" style="left:1047.2px;top:2.4px;width:12px;height:10.8px;background:#3a3a3a;"></div>
<svg class="a" style="left:1047.2px;top:2.4px;" width="12" height="11" viewBox="0 0 12 11"><rect x="2.5" y="3.5" width="5" height="6" fill="none" stroke="#e0e0e0" stroke-width="0.9"/><path d="M4.5 3.5V1.8H8.5L10 3.3V7.8H7.5" fill="none" stroke="#e0e0e0" stroke-width="0.9"/></svg>
<div class="a" style="left:1059.2px;top:2.4px;width:11.2px;height:10.8px;background:#262626;border-radius:0 2.5px 2.5px 0"></div>
<svg class="a" style="left:1059.2px;top:2.4px;" width="11" height="11" viewBox="0 0 11 11"><path d="M3.5 3.5L7.5 7.5M7.5 3.5L3.5 7.5" stroke="#5a5a5a" stroke-width="0.9"/></svg>
<svg class="a" style="left:1034.5px;top:3px;" width="10" height="10" viewBox="0 0 10 10"><path d="M5 2L8.5 5.5M6 1L9.2 4.2M3.5 5L5.5 7L7.5 3.5Z M4.5 6L1 9.5" stroke="#8a8a8a" stroke-width="0.9" fill="none"/></svg>
<div class="a" style="left:1075.4px;top:1.6px;width:119.19999999999982px;height:12.4px;background:#1c1c1c;border-radius:3px;box-shadow:inset 0 0 0 0.8px #2c2c2c"></div>
<div class="a" style="left:1076.2px;top:2.4px;width:20px;height:10.8px;background:#232323;border-radius:2.5px 0 0 2.5px"></div>
<svg class="a" style="left:1078.4px;top:3px;" width="12" height="10" viewBox="0 0 12 10"><rect x="1.5" y="2" width="8.5" height="7.5" fill="none" stroke="#d0d0d0" stroke-width="0.9"/><path d="M2.5 8.5L6 4L9 8.5Z" fill="#e0e0e0"/></svg>
<svg class="a" style="left:1088.9px;top:5.300000000000001px;" width="6" height="6" viewBox="0 0 6 6"><path d="M0.8 1.9L3 4.1L5.2 1.9" stroke="#bdbdbd" stroke-width="1" fill="none"/></svg>
<div class="t" style="left:1099.7px;top:3.7px;color:#d4d4d4;font-size:7.5px;">ViewLayer</div>
<div class="a" style="left:1170.6px;top:2.4px;width:12px;height:10.8px;background:#3a3a3a;"></div>
<svg class="a" style="left:1170.6px;top:2.4px;" width="12" height="11" viewBox="0 0 12 11"><rect x="2.5" y="3.5" width="5" height="6" fill="none" stroke="#e0e0e0" stroke-width="0.9"/><path d="M4.5 3.5V1.8H8.5L10 3.3V7.8H7.5" fill="none" stroke="#e0e0e0" stroke-width="0.9"/></svg>
<div class="a" style="left:1182.6px;top:2.4px;width:11.2px;height:10.8px;background:#262626;border-radius:0 2.5px 2.5px 0"></div>
<svg class="a" style="left:1182.6px;top:2.4px;" width="11" height="11" viewBox="0 0 11 11"><path d="M3.5 3.5L7.5 7.5M7.5 3.5L3.5 7.5" stroke="#5a5a5a" stroke-width="0.9"/></svg>
<div class="a" style="left:0px;top:648px;width:1200px;height:13px;background:#1b1b1b;"></div>
<svg class="a" style="left:4.5px;top:648.6px;" width="9" height="12" viewBox="0 0 9 12"><rect x="1.8" y="0.8" width="5.4" height="9.6" rx="2.5" fill="none" stroke="#b0b0b0" stroke-width="0.9"/><path d="M2.2 4.5V3.2Q2.2 1.2 4.5 1.2V4.5Z" fill="#c8c8c8"/></svg>
<div class="t" style="left:19.7px;top:650.1px;color:#a8a8a8;font-size:7.5px;">Select</div>
<svg class="a" style="left:137.5px;top:648.6px;" width="9" height="12" viewBox="0 0 9 12"><rect x="1.8" y="0.8" width="5.4" height="9.6" rx="2.5" fill="none" stroke="#b0b0b0" stroke-width="0.9"/><rect x="4" y="2.3" width="1.2" height="3" fill="#c8c8c8"/></svg>
<div class="t" style="left:151.7px;top:650.1px;color:#a8a8a8;font-size:7.5px;">Rotate View</div>
<svg class="a" style="left:269.5px;top:648.6px;" width="9" height="12" viewBox="0 0 9 12"><rect x="1.8" y="0.8" width="5.4" height="9.6" rx="2.5" fill="none" stroke="#b0b0b0" stroke-width="0.9"/><path d="M6.8 4.5V3.2Q6.8 1.2 4.5 1.2V4.5Z" fill="#c8c8c8"/></svg>
<div class="t" style="left:283.7px;top:650.1px;color:#a8a8a8;font-size:7.5px;">Object</div>
<div class="a" style="left:20px;top:659.6px;width:161px;height:0.9px;background:#3a3a3a;"></div>
<div class="t" style="left:1175.5px;top:650.1px;color:#bdbdbd;font-size:7.5px;">4.0.2</div>
<div class="a" style="left:0px;top:15.5px;width:990px;height:1px;background:#262626;"></div>
<div class="a" style="left:5px;top:18.6px;width:18px;height:9.8px;background:#262626;border-radius:2.5px"></div>
<svg class="a" style="left:6px;top:19px;" width="12" height="10" viewBox="0 0 12 10"><circle cx="7.5" cy="3" r="2.3" fill="#d0d0d0"/><path d="M1.5 5.5L5.5 5.5M3.5 3.5L3.5 7.5M1 8.5L9 8.5" stroke="#c8c8c8" stroke-width="1.1"/><path d="M2 7L2 9.5M8 7L8 9.5" stroke="#c8c8c8" stroke-width="1"/></svg>
<svg class="a" style="left:16.7px;top:20.6px;" width="6" height="6" viewBox="0 0 6 6"><path d="M0.8 1.9L3 4.1L5.2 1.9" stroke="#bdbdbd" stroke-width="1" fill="none"/></svg>
<div class="a" style="left:28.8px;top:18.6px;width:66.2px;height:9.8px;background:#262626;border-radius:2.5px"></div>
<svg class="a" style="left:30px;top:19px;" width="11" height="10" viewBox="0 0 11 10"><rect x="2.8" y="2.3" width="5.4" height="5.4" fill="#e6e6e6"/><path d="M1 3V1H3M8 1H10V3M10 7V9H8M3 9H1V7" stroke="#bdbdbd" stroke-width="0.9" fill="none"/></svg>
<div class="t" style="left:43px;top:19.3px;color:#d9d9d9;font-size:7.5px;">Object Mode</div>
<svg class="a" style="left:88.2px;top:20.8px;" width="6" height="6" viewBox="0 0 6 6"><path d="M0.8 1.9L3 4.1L5.2 1.9" stroke="#bdbdbd" stroke-width="1" fill="none"/></svg>
<div class="t" style="left:103.7px;top:19.3px;color:#d6d6d6;font-size:7.5px;">View</div>
<div class="t" style="left:129px;top:19.3px;color:#d6d6d6;font-size:7.5px;">Select</div>
<div class="t" style="left:159px;top:19.3px;color:#d6d6d6;font-size:7.5px;">Add</div>
<div class="t" style="left:182.6px;top:19.3px;color:#d6d6d6;font-size:7.5px;">Object</div>
<div class="a" style="left:415px;top:18.6px;width:51px;height:9.8px;background:#292929;border-radius:2.5px"></div>
<svg class="a" style="left:417.5px;top:18.8px;" width="11" height="10" viewBox="0 0 11 10"><path d="M2 1.5V8.5H9M2 8.5L7 3.5" stroke="#d8d8d8" stroke-width="1" fill="none"/><circle cx="2" cy="1.8" r="1" fill="#d8d8d8"/><circle cx="9" cy="8.5" r="1" fill="#d8d8d8"/></svg>
<div class="t" style="left:431.6px;top:19.3px;color:#d9d9d9;font-size:7.5px;">Global</div>
<svg class="a" style="left:458.5px;top:20.8px;" width="6" height="6" viewBox="0 0 6 6"><path d="M0.8 1.9L3 4.1L5.2 1.9" stroke="#bdbdbd" stroke-width="1" fill="none"/></svg>
<svg class="a" style="left:471px;top:18.8px;" width="11" height="10" viewBox="0 0 11 10"><path d="M4.6 3.2L6.2 1.6Q7.4 0.6 8.6 1.6Q9.6 2.8 8.6 4L6.4 6.2Q5.2 7.2 4.2 6.2M5.6 4.6L3.6 6.6Q2.6 7.8 1.6 6.8Q0.6 5.6 1.6 4.6L3.6 2.6Q4.8 1.6 5.8 2.6" fill="none" stroke="#d8d8d8" stroke-width="1"/></svg>
<svg class="a" style="left:482px;top:20.8px;" width="6" height="6" viewBox="0 0 6 6"><path d="M0.8 1.9L3 4.1L5.2 1.9" stroke="#bdbdbd" stroke-width="1" fill="none"/></svg>
<div class="a" style="left:492.5px;top:18.6px;width:12px;height:9.8px;background:#4a4a4a;border-radius:2.5px"></div>
<svg class="a" style="left:493.5px;top:19px;" width="10" height="9" viewBox="0 0 10 9"><path d="M3 8L3 4A2.5 2.5 0 0 1 8 4L8 6" stroke="#8a8a8a" stroke-width="1.6" fill="none"/></svg>
<div class="a" style="left:507.5px;top:20px;width:8px;height:7px;background:#e6e6e6;border-radius:1px"></div>
<svg class="a" style="left:517.5px;top:20.8px;" width="6" height="6" viewBox="0 0 6 6"><path d="M0.8 1.9L3 4.1L5.2 1.9" stroke="#bdbdbd" stroke-width="1" fill="none"/></svg>
<div class="a" style="left:528.4px;top:18.6px;width:11px;height:9.8px;background:#4a4a4a;border-radius:2.5px"></div>
<svg class="a" style="left:528.4px;top:18.6px;" width="11" height="10" viewBox="0 0 11 10"><circle cx="5.5" cy="4.9" r="2.6" fill="none" stroke="#8a8a8a" stroke-width="0.8"/><circle cx="5.5" cy="4.9" r="1.1" fill="#e6e6e6"/></svg>
<svg class="a" style="left:543px;top:18.8px;" width="10" height="10" viewBox="0 0 10 10"><path d="M1 9Q3 9 4 5Q5 1 5 1Q5.5 1 6.5 5Q7.5 9 9 9" stroke="#bdbdbd" stroke-width="0.9" fill="none"/></svg>
<svg class="a" style="left:830px;top:18.5px;" width="12" height="11" viewBox="0 0 12 11"><path d="M3.5 3.5Q6.5 0.5 9.5 3.5Q6.5 6.5 3.5 3.5Z" fill="none" stroke="#dcdcdc" stroke-width="1"/><circle cx="6.5" cy="3.5" r="1" fill="#dcdcdc"/><path d="M1 5L6 7L3.5 8L2.5 10.5Z" fill="#e6e6e6"/></svg>
<svg class="a" style="left:843.5px;top:20.8px;" width="6" height="6" viewBox="0 0 6 6"><path d="M0.8 1.9L3 4.1L5.2 1.9" stroke="#bdbdbd" stroke-width="1" fill="none"/></svg>
<div class="a" style="left:853.8px;top:18.2px;width:11.4px;height:11px;background:#45679f;border-radius:2.5px 0 0 2.5px"></div>
<svg class="a" style="left:853.8px;top:18.2px;" width="11.4" height="11" viewBox="0 0 11.4 11"><path d="M2.5 8.5Q5 3 9.5 2.5M3.5 3.5L8.5 8.5" stroke="#dbe6f5" stroke-width="1" fill="none"/></svg>
<div class="a" style="left:865.2px;top:18.2px;width:12px;height:11px;background:#2a2a2a;border-radius:0 2.5px 2.5px 0"></div>
<svg class="a" style="left:868.5px;top:20.8px;" width="6" height="6" viewBox="0 0 6 6"><path d="M0.8 1.9L3 4.1L5.2 1.9" stroke="#bdbdbd" stroke-width="1" fill="none"/></svg>
<div class="a" style="left:882px;top:18.2px;width:11.6px;height:11px;background:#45679f;border-radius:2.5px 0 0 2.5px"></div>
<svg class="a" style="left:882px;top:18.2px;" width="11.6" height="11" viewBox="0 0 11.6 11"><circle cx="6.8" cy="4.6" r="3" fill="#e8eef8"/><path d="M2.5 4.5Q1.5 8.5 5.5 8.5" stroke="#cfdcf0" stroke-width="1" fill="none"/></svg>
<div class="a" style="left:893.6px;top:18.2px;width:12.4px;height:11px;background:#2a2a2a;border-radius:0 2.5px 2.5px 0"></div>
<svg class="a" style="left:897.5px;top:20.8px;" width="6" height="6" viewBox="0 0 6 6"><path d="M0.8 1.9L3 4.1L5.2 1.9" stroke="#bdbdbd" stroke-width="1" fill="none"/></svg>
<div class="a" style="left:909px;top:18.2px;width:12px;height:11px;background:#2d2d2d;border-radius:2.5px"></div>
<svg class="a" style="left:909px;top:18.2px;" width="12" height="11" viewBox="0 0 12 11"><rect x="4.5" y="2.5" width="5" height="5" fill="none" stroke="#cfcfcf" stroke-width="0.9"/><rect x="2.5" y="4" width="5" height="5" fill="none" stroke="#cfcfcf" stroke-width="0.9"/></svg>
<div class="a" style="left:925.5px;top:18.2px;width:47px;height:11px;background:#4a4a4a;border-radius:2.5px"></div>
<div class="a" style="left:937.5px;top:18.2px;width:11.8px;height:11px;background:#4c73b3;"></div>
<svg class="a" style="left:925.5px;top:18.2px;" width="47" height="11" viewBox="0 0 47 11"><circle cx="6" cy="5.5" r="3.3" fill="none" stroke="#cfcfcf" stroke-width="0.9"/><path d="M2.7 5.5H9.3M6 2.2V8.8" stroke="#cfcfcf" stroke-width="0.6"/><circle cx="17.9" cy="5.5" r="3.6" fill="#f0f0f0"/><circle cx="29.5" cy="5.5" r="3.5" fill="#9a9a9a"/><path d="M29.5 2A3.5 3.5 0 0 0 29.5 9Z" fill="#e6e6e6"/><circle cx="41" cy="5.5" r="3.5" fill="none" stroke="#c8c8c8" stroke-width="0.9"/><path d="M38.8 7.8L43.2 3.2" stroke="#c8c8c8" stroke-width="0.9"/></svg>
<div class="a" style="left:975.5px;top:18.2px;width:10px;height:11px;background:#2a2a2a;border-radius:2.5px"></div>
<svg class="a" style="left:977.5px;top:20.8px;" width="6" height="6" viewBox="0 0 6 6"><path d="M0.8 1.9L3 4.1L5.2 1.9" stroke="#bdbdbd" stroke-width="1" fill="none"/></svg>
<svg class="a" style="left:840px;top:25px;" width="80" height="25" viewBox="0 0 80 25"><path d="M10.5 5.5V20.8H46.5V5.5M11 20.8L44 6M46.5 20.8L65 8" stroke="#1a1a1a" stroke-width="0.9" fill="none"/></svg>
<div class="a" style="left:4.2px;top:34px;width:58.3px;height:11.7px;background:#2a2a2a;border-radius:2.5px"></div>
<div class="a" style="left:4.2px;top:34px;width:11.3px;height:11.7px;background:#4772b3;border-radius:2.5px 0 0 2.5px"></div>
<svg class="a" style="left:4.2px;top:34px;" width="59" height="12" viewBox="0 0 59 12"><g transform="translate(0.00 0)"><rect x="2.3" y="2.3" width="7" height="7" fill="none" stroke="#e8f0ff" stroke-width="1" stroke-dasharray="1.1 1.1"/></g><g transform="translate(11.65 0)"><rect x="1.5" y="4.3" width="5" height="5.2" fill="#bdbdbd"/><rect x="3.8" y="2" width="5.8" height="5.8" fill="#ececec"/></g><g transform="translate(23.30 0)"><path d="M2 2.5V9.5H9" fill="none" stroke="#b0b0b0" stroke-width="0.9" stroke-dasharray="1.1 1"/><rect x="4.3" y="2" width="5.3" height="5.3" fill="#ececec"/></g><g transform="translate(34.95 0)"><rect x="2.2" y="2.4" width="7" height="7" fill="#2a2a2a" stroke="#ececec" stroke-width="1.7"/></g><g transform="translate(46.60 0)"><rect x="1.8" y="2" width="8" height="7.8" fill="none" stroke="#9a9a9a" stroke-width="0.9" stroke-dasharray="1.1 1"/><rect x="3.6" y="3.7" width="4.5" height="4.5" fill="#ececec"/></g></svg>
<svg class="a" style="left:340px;top:37px;" width="6" height="6" viewBox="0 0 6 6"><path d="M0.8 1.9L3 4.1L5.2 1.9" stroke="#bdbdbd" stroke-width="1" fill="none"/></svg>
<svg class="a" style="left:348.5px;top:35px;" width="11" height="11" viewBox="0 0 11 11"><circle cx="5.5" cy="5.5" r="4.3" fill="#d0693a"/><path d="M5.5 1.2A4.3 4.3 0 0 1 9.8 5.5L5.5 5.5Z" fill="#3aa3c8"/><path d="M1.2 5.5A4.3 4.3 0 0 1 5.5 1.2V5.5Z" fill="#6aaa3a"/><path d="M5.5 5.5H9.8A4.3 4.3 0 0 1 5.5 9.8Z" fill="#c9508a"/></svg>
<div class="a" style="left:363px;top:34.5px;width:56px;height:11.5px;background:#3a3a3a;border-radius:2.5px"></div>
<div class="a" style="left:374.2px;top:34.5px;width:11px;height:11.5px;background:#4c73b3;"></div>
<svg class="a" style="left:363px;top:34.5px;" width="56" height="11.5" viewBox="0 0 56 11.5"><rect x="3" y="3" width="5.5" height="5.5" fill="#cfcfcf"/><circle cx="16.7" cy="5.75" r="3.8" fill="#f2f2f2"/><path d="M16.7 2A3.8 3.8 0 0 0 12.9 5.75H16.7Z" fill="#4c73b3"/><path d="M20.5 5.75A3.8 3.8 0 0 1 16.7 9.5V5.75Z" fill="#4c73b3"/><path d="M24.5 9L26.5 3.5L28 6.5" fill="#bfbfbf"/><circle cx="29.5" cy="7.5" r="2" fill="none" stroke="#bfbfbf" stroke-width="0.9"/><circle cx="39" cy="5.75" r="3.6" fill="none" stroke="#bfbfbf" stroke-width="0.9"/><path d="M36 4Q39 6 42 5M38 2.5Q37 6 39 9.2" stroke="#bfbfbf" stroke-width="0.7" fill="none"/><path d="M47 9.5H54V6H47ZM49 6V2H52V6" fill="none" stroke="#bfbfbf" stroke-width="0.9"/></svg>
<div class="a" style="left:422px;top:34.7px;width:149.4px;height:10.9px;background:#1e1e1e;border-radius:2.5px"></div>
<svg class="a" style="left:424px;top:35.5px;" width="10" height="10" viewBox="0 0 10 10"><circle cx="5.6" cy="3.8" r="2.6" fill="none" stroke="#d6d6d6" stroke-width="1"/><path d="M3.8 5.7L1 8.6" stroke="#d6d6d6" stroke-width="1.2"/></svg>
<div class="t" style="left:438.2px;top:35.7px;color:#dadada;font-size:7.5px;">rubber</div>
<div class="a" style="left:573.3px;top:34.7px;width:10.7px;height:10.9px;background:#4a4a4a;"></div>
<svg class="a" style="left:575.7px;top:37.5px;" width="6" height="6" viewBox="0 0 6 6"><path d="M0.8 1.9L3 4.1L5.2 1.9" stroke="#999" stroke-width="1" fill="none"/></svg>
<div class="a" style="left:585px;top:34.7px;width:11px;height:10.9px;background:#3e3e3e;"></div>
<svg class="a" style="left:585px;top:34.7px;" width="11" height="11" viewBox="0 0 11 11"><path d="M3.5 2H7.5V9L5.5 7.5L3.5 9Z" fill="#e0e0e0"/></svg>
<svg class="a" style="left:597px;top:35px;" width="13" height="11" viewBox="0 0 13 11"><path d="M2 1.5V9M2 3H5M2 8H5" stroke="#e0e0e0" stroke-width="1" fill="none"/><rect x="5.5" y="1.5" width="5" height="3" fill="#e0e0e0"/><rect x="5.5" y="6.5" width="5" height="3" fill="#e0e0e0"/></svg>
<svg class="a" style="left:610.3px;top:37.5px;" width="6" height="6" viewBox="0 0 6 6"><path d="M0.8 1.9L3 4.1L5.2 1.9" stroke="#bdbdbd" stroke-width="1" fill="none"/></svg>
<svg class="a" style="left:619.5px;top:35px;" width="12" height="11" viewBox="0 0 12 11"><path d="M1 1.5H11L7 6V10L5 9V6Z" fill="#e6e6e6"/></svg>
<svg class="a" style="left:631.5px;top:37.5px;" width="6" height="6" viewBox="0 0 6 6"><path d="M0.8 1.9L3 4.1L5.2 1.9" stroke="#bdbdbd" stroke-width="1" fill="none"/></svg>
<div class="a" style="left:946.9px;top:35.9px;width:39.1px;height:8.9px;background:#292929;border-radius:2.5px"></div>
<div class="t" style="left:950.5px;top:35.8px;color:#d4d4d4;font-size:7.5px;">Options</div>
<svg class="a" style="left:977.7px;top:37.3px;" width="6" height="6" viewBox="0 0 6 6"><path d="M0.8 1.9L3 4.1L5.2 1.9" stroke="#bdbdbd" stroke-width="1" fill="none"/></svg>
<div class="a" style="left:4.2px;top:53.7px;width:23.4px;height:42.5px;background:#242424;border-radius:3px"></div>
<div class="a" style="left:4.2px;top:100.2px;width:23.4px;height:85.60000000000001px;background:#242424;border-radius:3px"></div>
<div class="a" style="left:4.2px;top:192.3px;width:23.4px;height:40.19999999999999px;background:#242424;border-radius:3px"></div>
<div class="a" style="left:4.2px;top:239px;width:23.4px;height:21px;background:#242424;border-radius:3px"></div>
<div class="a" style="left:4.2px;top:120.7px;width:23.4px;height:1px;background:#2f2f2f;"></div>
<div class="a" style="left:4.2px;top:142.5px;width:23.4px;height:1px;background:#2f2f2f;"></div>
<div class="a" style="left:4.2px;top:164.0px;width:23.4px;height:1px;background:#2f2f2f;"></div>
<div class="a" style="left:4.2px;top:211.9px;width:23.4px;height:1px;background:#2f2f2f;"></div>
<div class="a" style="left:4.2px;top:53.7px;width:23.4px;height:21.3px;background:#4772b3;border-radius:3px 3px 0 0"></div>
<svg class="a" style="left:4.2px;top:53.7px;" width="24" height="22" viewBox="0 0 24 22"><rect x="6.5" y="4.5" width="11" height="11" fill="none" stroke="#d6e2f5" stroke-width="0.9" stroke-dasharray="1.4 1.1"/><path d="M10 6.8V13.5L12 11.7L15 10Z" fill="#e8eef8"/><path d="M20.5 19.5L22.5 17.5V19.5Z" fill="#cfdcf0"/></svg>
<svg class="a" style="left:4.2px;top:75px;" width="24" height="21.5" viewBox="0 0 24 21.5"><circle cx="11.8" cy="10.8" r="6" fill="none" stroke="#dcdcdc" stroke-width="1" stroke-dasharray="3 1.6"/><path d="M11.8 6V9M11.8 12.6V15.6M7 10.8H10M13.6 10.8H16.6" stroke="#dcdcdc" stroke-width="0.9"/></svg>
<svg class="a" style="left:4.2px;top:100.2px;" width="24" height="21" viewBox="0 0 24 21"><path d="M11.8 3.5V17.5M4.8 10.5H18.8" stroke="#dcdcdc" stroke-width="1"/><path d="M11.8 3L9.8 5.6H13.8ZM11.8 18L9.8 15.4H13.8ZM4.3 10.5L6.9 8.5V12.5ZM19.3 10.5L16.7 8.5V12.5Z" fill="#dcdcdc"/></svg>
<svg class="a" style="left:4.2px;top:121.2px;" width="24" height="21.5" viewBox="0 0 24 21.5"><path d="M6 8.5A6 6 0 0 1 17.6 8.5M17.6 12.5A6 6 0 0 1 6 12.5" fill="none" stroke="#dcdcdc" stroke-width="1"/><path d="M11.8 8.3L14 10.5L11.8 12.7L9.6 10.5Z" fill="#dcdcdc"/><path d="M4.6 10.5L7.4 10.5L6 8ZM19 10.5L16.2 10.5L17.6 13Z" fill="#dcdcdc"/></svg>
<svg class="a" style="left:4.2px;top:143px;" width="24" height="21.5" viewBox="0 0 24 21.5"><rect x="6.5" y="5.5" width="10.5" height="10.5" fill="none" stroke="#d0d0d0" stroke-width="0.9"/><rect x="6.5" y="10.5" width="5.5" height="5.5" fill="#e8e8e8"/><path d="M12 10L16 6M14 6H16V8" stroke="#d0d0d0" stroke-width="0.9" fill="none"/><path d="M21 19.5L23 17.5V19.5Z" fill="#aaa"/></svg>
<svg class="a" style="left:4.2px;top:164.5px;" width="24" height="21.3" viewBox="0 0 24 21.3"><circle cx="11.8" cy="10.6" r="6" fill="none" stroke="#d6d6d6" stroke-width="1"/><rect x="8.8" y="7.6" width="6" height="6" fill="#e8e8e8"/><path d="M11.8 3.3L10.6 4.8H13ZM11.8 17.9L10.6 16.4H13ZM4.5 10.6L6 9.4V11.8ZM19.1 10.6L17.6 9.4V11.8Z" fill="#d6d6d6"/></svg>
<svg class="a" style="left:4.2px;top:192.3px;" width="24" height="20.2" viewBox="0 0 24 20.2"><path d="M6.5 13.2L14.2 5.5L16.5 7.8L8.8 15.5L6 16Z" fill="none" stroke="#e0e0e0" stroke-width="1.1"/><path d="M13.2 6.5L15.5 8.8" stroke="#e0e0e0" stroke-width="0.9"/><path d="M9.5 16.2Q13 17.5 15.5 14Q17.5 11.5 18.8 15.5" fill="none" stroke="#d8d8d8" stroke-width="0.9"/><path d="M21 18L23 16V18Z" fill="#aaa"/></svg>
<svg class="a" style="left:4.2px;top:212.4px;" width="24" height="20.2" viewBox="0 0 24 20.2"><path d="M6.8 3.3V16.6H19.5" fill="none" stroke="#e6e6e6" stroke-width="1.3"/><path d="M8.2 7.5A8.4 8.4 0 0 1 16.8 15.6H8.2Z" fill="#6fc4b0"/><path d="M6.8 6H9M6.8 8.5H8.5M6.8 11H9M6.8 13.5H8.5M9 16.6V15M11.5 16.6V15.3M14 16.6V15" stroke="#e6e6e6" stroke-width="0.7"/></svg>
<svg class="a" style="left:4.2px;top:239px;" width="24" height="21" viewBox="0 0 24 21"><path d="M8 9L11 6.5H18.5V14.5L15.5 17.5H8Z M8 9H15.5V17.5M15.5 9L18.5 6.5" fill="none" stroke="#d8d8d8" stroke-width="0.9"/><path d="M5.5 2.5V6.5M3.5 4.5H7.5" stroke="#e8e8e8" stroke-width="1"/><path d="M21 19L23 17V19Z" fill="#aaa"/></svg>
<div class="t" style="left:38.9px;top:54.2px;color:#e8e8e8;font-size:7.5px;text-shadow:0 0 1px #111,0 0 1px #111">User Perspective</div>
<div class="t" style="left:38.9px;top:65.0px;color:#e8e8e8;font-size:7.5px;text-shadow:0 0 1px #111,0 0 1px #111">(93) Collection | Cylinder.002</div>
<div class="t" style="left:38.9px;top:82.8px;color:#e8e8e8;font-size:7.5px;text-shadow:0 0 1px #111,0 0 1px #111">Objects</div>
<div class="t" style="left:75.8px;top:82.8px;color:#e8e8e8;font-size:7.5px;text-shadow:0 0 1px #111,0 0 1px #111">4</div>
<div class="t" style="left:38.9px;top:93.2px;color:#e8e8e8;font-size:7.5px;text-shadow:0 0 1px #111,0 0 1px #111">Vertices</div>
<div class="t" style="left:75.8px;top:93.2px;color:#e8e8e8;font-size:7.5px;text-shadow:0 0 1px #111,0 0 1px #111">44,164</div>
<div class="t" style="left:38.9px;top:103.8px;color:#e8e8e8;font-size:7.5px;text-shadow:0 0 1px #111,0 0 1px #111">Edges</div>
<div class="t" style="left:75.8px;top:103.8px;color:#e8e8e8;font-size:7.5px;text-shadow:0 0 1px #111,0 0 1px #111">84,868</div>
<div class="t" style="left:38.9px;top:114.5px;color:#e8e8e8;font-size:7.5px;text-shadow:0 0 1px #111,0 0 1px #111">Faces</div>
<div class="t" style="left:75.8px;top:114.5px;color:#e8e8e8;font-size:7.5px;text-shadow:0 0 1px #111,0 0 1px #111">42,433</div>
<div class="t" style="left:38.9px;top:124.9px;color:#e8e8e8;font-size:7.5px;text-shadow:0 0 1px #111,0 0 1px #111">Triangles</div>
<div class="t" style="left:75.8px;top:124.9px;color:#e8e8e8;font-size:7.5px;text-shadow:0 0 1px #111,0 0 1px #111">84,866</div>
<svg class="a" style="left:0px;top:0px;" width="990" height="200" viewBox="0 0 990 200"><line x1="959.1" y1="79.5" x2="959.1" y2="60.8" stroke="#3d83d6" stroke-width="1.6"/><line x1="959.1" y1="79.5" x2="947.1" y2="73.6" stroke="#6e9e2e" stroke-width="1.6"/><line x1="959.1" y1="79.5" x2="975.6" y2="74.6" stroke="#c9394c" stroke-width="1.6"/><circle cx="943.2" cy="84.4" r="4.2" fill="#6a2a34" fill-opacity="0.8" stroke="#c9394c" stroke-width="1"/><circle cx="971.3" cy="85.4" r="4.2" fill="#3e5228" fill-opacity="0.8" stroke="#7aa83a" stroke-width="1"/><circle cx="959.1" cy="97.8" r="4.2" fill="#2a4466" fill-opacity="0.8" stroke="#3d6fb0" stroke-width="1"/><circle cx="959.1" cy="60.8" r="4.2" fill="#3d83d6" fill-opacity="1"/><circle cx="947.1" cy="73.6" r="4.2" fill="#6e9e2e" fill-opacity="1"/><circle cx="975.6" cy="74.6" r="4.2" fill="#c9394c" fill-opacity="1"/><text x="959.1" y="63" font-size="6" font-family="Liberation Sans" font-weight="bold" fill="#111" text-anchor="middle">Z</text><text x="947.1" y="75.8" font-size="6" font-family="Liberation Sans" font-weight="bold" fill="#111" text-anchor="middle">Y</text><text x="975.6" y="76.8" font-size="6" font-family="Liberation Sans" font-weight="bold" fill="#111" text-anchor="middle">X</text></svg>
<div class="a" style="left:968.6px;top:105.3px;width:16px;height:16px;background:rgba(28,28,28,0.45);border-radius:50%"></div>
<div class="a" style="left:968.6px;top:124.6px;width:16px;height:16px;background:rgba(28,28,28,0.45);border-radius:50%"></div>
<div class="a" style="left:968.6px;top:143.3px;width:16px;height:16px;background:rgba(28,28,28,0.45);border-radius:50%"></div>
<div class="a" style="left:968.6px;top:162px;width:16px;height:16px;background:rgba(28,28,28,0.45);border-radius:50%"></div>
<svg class="a" style="left:968.6px;top:105.3px;" width="16" height="16" viewBox="0 0 16 16"><circle cx="9.2" cy="6.6" r="3.3" fill="none" stroke="#e6e6e6" stroke-width="1.3"/><path d="M9.2 4.6V8.6" stroke="#e6e6e6" stroke-width="0.9"/><path d="M6.7 9.1L3.6 12.2" stroke="#e6e6e6" stroke-width="1.6" stroke-linecap="round"/></svg>
<svg class="a" style="left:968.6px;top:124.6px;" width="16" height="16" viewBox="0 0 16 16"><path d="M5.5 9V4.2M7.3 8.5V3M9.1 8.5V3.4M10.9 9V4.6" stroke="#e6e6e6" stroke-width="1.5" stroke-linecap="round"/><path d="M4.6 8.5Q4.2 12.8 8.2 13Q11.8 13 11.8 9.2V7.5H4.6Z" fill="#e6e6e6"/><path d="M4.8 10L2.8 7.6" stroke="#e6e6e6" stroke-width="1.4" stroke-linecap="round"/></svg>
<svg class="a" style="left:968.6px;top:143.3px;" width="16" height="16" viewBox="0 0 16 16"><circle cx="5.4" cy="5.2" r="2" fill="none" stroke="#e6e6e6" stroke-width="1.2"/><circle cx="9.8" cy="4.6" r="2.4" fill="none" stroke="#e6e6e6" stroke-width="1.2"/><rect x="3.5" y="8" width="7.5" height="4" rx="0.8" fill="#e6e6e6"/><path d="M11.2 10L13.8 8.4V11.8Z" fill="#e6e6e6"/></svg>
<svg class="a" style="left:968.6px;top:162px;" width="16" height="16" viewBox="0 0 16 16"><path d="M4.5 4.5H11.5L13 12H3Z" fill="none" stroke="#e6e6e6" stroke-width="0.9"/><path d="M7 4.5L6.3 12M9 4.5L9.7 12M3.8 7H12.2M3.4 9.5H12.6" stroke="#e6e6e6" stroke-width="0.8"/></svg>
<svg class="a" style="left:984px;top:57px;" width="6" height="8" viewBox="0 0 6 8"><path d="M4.5 1.5L1.8 4L4.5 6.5" stroke="#aaa" stroke-width="0.9" fill="none"/></svg>
<div class="a" style="left:990px;top:15.5px;width:2.6px;height:645px;background:#161616;"></div>
<div class="a" style="left:992.6px;top:15.5px;width:207.4px;height:202.5px;background:#282828;"></div>
<div class="a" style="left:1000px;top:18.3px;width:16.5px;height:10.5px;background:#232323;border-radius:2.5px"></div>
<svg class="a" style="left:1000.5px;top:18.3px;" width="12" height="11" viewBox="0 0 12 11"><path d="M2 2V8.5M2 4.5H4M2 8H4" stroke="#d0d0d0" stroke-width="0.9" fill="none"/><rect x="1" y="1" width="3" height="2" fill="#e0e0e0"/><rect x="4.5" y="3.5" width="5.5" height="2" fill="#e0e0e0"/><rect x="4.5" y="7" width="5.5" height="2" fill="#e0e0e0"/></svg>
<svg class="a" style="left:1010.2px;top:20.6px;" width="6" height="6" viewBox="0 0 6 6"><path d="M0.8 1.9L3 4.1L5.2 1.9" stroke="#bdbdbd" stroke-width="1" fill="none"/></svg>
<div class="a" style="left:1022px;top:18.3px;width:18px;height:10.5px;background:#232323;border-radius:2.5px"></div>
<svg class="a" style="left:1023px;top:18.5px;" width="12" height="11" viewBox="0 0 12 11"><rect x="1.5" y="2.5" width="8" height="7" fill="none" stroke="#c8c8c8" stroke-width="0.9"/><rect x="3" y="1" width="7.5" height="7" fill="#bdbdbd"/><path d="M4 7L6.5 3.5L9 7Z" fill="#fff"/></svg>
<svg class="a" style="left:1033.8px;top:20.6px;" width="6" height="6" viewBox="0 0 6 6"><path d="M0.8 1.9L3 4.1L5.2 1.9" stroke="#bdbdbd" stroke-width="1" fill="none"/></svg>
<div class="a" style="left:1052px;top:17.6px;width:72.8px;height:11.8px;background:#1d1d1d;border-radius:2.5px"></div>
<svg class="a" style="left:1054px;top:18.5px;" width="11" height="11" viewBox="0 0 11 11"><circle cx="6" cy="4.2" r="2.7" fill="none" stroke="#d8d8d8" stroke-width="1"/><path d="M4.1 6.2L1.3 9" stroke="#d8d8d8" stroke-width="1.2"/></svg>
<div class="a" style="left:1159.5px;top:18.3px;width:17px;height:10.5px;background:#232323;border-radius:2.5px"></div>
<svg class="a" style="left:1160px;top:18.5px;" width="11" height="11" viewBox="0 0 11 11"><path d="M1.5 1.8H9.5L6.3 5.5V9.2L4.7 8.3V5.5Z" fill="none" stroke="#dcdcdc" stroke-width="0.9"/></svg>
<svg class="a" style="left:1171.2px;top:20.6px;" width="6" height="6" viewBox="0 0 6 6"><path d="M0.8 1.9L3 4.1L5.2 1.9" stroke="#bdbdbd" stroke-width="1" fill="none"/></svg>
<div class="a" style="left:1182.5px;top:18px;width:13.5px;height:11.5px;background:#4a4a4a;border-radius:2.5px"></div>
<svg class="a" style="left:1182.5px;top:18px;" width="14" height="12" viewBox="0 0 14 12"><rect x="3" y="4" width="6" height="5.5" fill="none" stroke="#dcdcdc" stroke-width="0.9"/><circle cx="9.8" cy="3.6" r="1.8" fill="#dcdcdc"/></svg>
<svg class="a" style="left:1006.3px;top:35.1px;" width="10" height="9" viewBox="0 0 10 9"><rect x="1" y="1" width="8" height="2.2" fill="#e6e6e6"/><rect x="1.6" y="3.8" width="6.8" height="4.5" fill="#e6e6e6"/><rect x="3.5" y="4.8" width="3" height="1" fill="#333"/></svg>
<div class="t" style="left:1019.6px;top:35.2px;color:#d2d2d2;font-size:7.5px;">Scene Collection</div>
<svg class="a" style="left:1008px;top:48.8px;" width="6" height="6" viewBox="0 0 6 6"><path d="M0.8 1.2H5.2L3 5Z" fill="#c8c8c8"/></svg>
<div class="a" style="left:1016.8px;top:46.3px;width:12.9px;height:10.3px;background:#3e3e3e;border-radius:2.5px"></div>
<svg class="a" style="left:1018.3px;top:47.2px;" width="10" height="9" viewBox="0 0 10 9"><rect x="1" y="1" width="8" height="2.2" fill="#e6e6e6"/><rect x="1.6" y="3.8" width="6.8" height="4.5" fill="#e6e6e6"/><rect x="3.5" y="4.8" width="3" height="1" fill="#333"/></svg>
<div class="t" style="left:1031.8px;top:47.3px;color:#d8d8d8;font-size:7.5px;">Collection</div>
<svg class="a" style="left:1157.5px;top:47px;" width="10" height="10" viewBox="0 0 10 10"><rect x="1" y="1" width="8" height="8" rx="1.2" fill="#e6e6e6"/><path d="M2.6 5L4.3 6.8L7.5 3" stroke="#222" stroke-width="1.2" fill="none"/></svg>
<svg class="a" style="left:1169.3px;top:47.8px;" width="10" height="8" viewBox="0 0 10 8"><path d="M1 4Q5 0 9 4Q5 8 1 4Z" fill="none" stroke="#e0e0e0" stroke-width="1"/><circle cx="5" cy="4" r="1.5" fill="#e0e0e0"/></svg>
<svg class="a" style="left:1181.8px;top:47.3px;" width="10" height="9" viewBox="0 0 10 9"><rect x="1" y="2.3" width="8" height="6" rx="1" fill="#e0e0e0"/><rect x="3" y="1" width="4" height="2" fill="#e0e0e0"/><circle cx="5" cy="5.3" r="1.7" fill="#2b2b2b"/><circle cx="5" cy="5.3" r="0.8" fill="#e0e0e0"/></svg>
<div class="a" style="left:1010.3px;top:58.5px;width:0.9px;height:58.5px;background:#505050;"></div>
<div class="a" style="left:992.6px;top:95px;width:207.4px;height:13px;background:#37558f;"></div>
<svg class="a" style="left:1020.9px;top:61.3px;" width="5" height="6" viewBox="0 0 5 6"><path d="M1 0.8L4 3L1 5.2Z" fill="#d0d0d0"/></svg>
<svg class="a" style="left:1031px;top:59.3px;" width="10" height="10" viewBox="0 0 10 10"><circle cx="3.5" cy="3" r="2" fill="none" stroke="#e98b3a" stroke-width="1.3"/><circle cx="7" cy="3" r="2" fill="none" stroke="#e98b3a" stroke-width="1.3"/><rect x="1.5" y="5.5" width="6.5" height="3.5" fill="#e98b3a"/><path d="M8 7.2L10 6V9Z" fill="#e98b3a"/></svg>
<div class="a" style="left:1082.9px;top:58px;width:12.9px;height:11.5px;background:#3d8c6c;border-radius:2.5px"></div>
<svg class="a" style="left:1083px;top:58px;" width="13" height="11.5" viewBox="0 0 13 11.5"><rect x="3" y="3" width="7" height="5.5" fill="none" stroke="#9fe0c0" stroke-width="0.8"/><path d="M4.5 7L6.5 5L8.5 7" stroke="#9fe0c0" stroke-width="0.8" fill="none"/></svg>
<div class="t" style="left:1044.7px;top:60.0px;color:#dadada;font-size:7.5px;">Camera</div>
<svg class="a" style="left:1169.3px;top:60.3px;" width="10" height="8" viewBox="0 0 10 8"><path d="M1 4Q5 0 9 4Q5 8 1 4Z" fill="none" stroke="#e0e0e0" stroke-width="1"/><circle cx="5" cy="4" r="1.5" fill="#e0e0e0"/></svg>
<svg class="a" style="left:1181.8px;top:59.8px;" width="10" height="9" viewBox="0 0 10 9"><rect x="1" y="2.3" width="8" height="6" rx="1" fill="#e0e0e0"/><rect x="3" y="1" width="4" height="2" fill="#e0e0e0"/><circle cx="5" cy="5.3" r="1.7" fill="#2b2b2b"/><circle cx="5" cy="5.3" r="0.8" fill="#e0e0e0"/></svg>
<svg class="a" style="left:1020.9px;top:74px;" width="5" height="6" viewBox="0 0 5 6"><path d="M1 0.8L4 3L1 5.2Z" fill="#d0d0d0"/></svg>
<svg class="a" style="left:1031px;top:72px;" width="10" height="10" viewBox="0 0 10 10"><path d="M1.5 1.8H8.5L5 8.5Z" fill="none" stroke="#e98b3a" stroke-width="1.5" stroke-linejoin="round"/></svg>
<div class="t" style="left:1044.7px;top:72.7px;color:#dadada;font-size:7.5px;">Cylinder</div>
<svg class="a" style="left:1086.7px;top:72px;" width="10" height="10" viewBox="0 0 10 10"><g opacity="1"><path d="M2 2.5H8L5 8Z" fill="none" stroke="#3aa97f" stroke-width="0.9"/><circle cx="2" cy="2.5" r="1.2" fill="#3aa97f"/><circle cx="8" cy="2.5" r="1.2" fill="#3aa97f"/><circle cx="5" cy="8" r="1.2" fill="#3aa97f"/></g></svg>
<svg class="a" style="left:1169.3px;top:73px;" width="10" height="8" viewBox="0 0 10 8"><path d="M1 4Q5 0 9 4Q5 8 1 4Z" fill="none" stroke="#e0e0e0" stroke-width="1"/><circle cx="5" cy="4" r="1.5" fill="#e0e0e0"/></svg>
<svg class="a" style="left:1181.8px;top:72.5px;" width="10" height="9" viewBox="0 0 10 9"><rect x="1" y="2.3" width="8" height="6" rx="1" fill="#e0e0e0"/><rect x="3" y="1" width="4" height="2" fill="#e0e0e0"/><circle cx="5" cy="5.3" r="1.7" fill="#2b2b2b"/><circle cx="5" cy="5.3" r="0.8" fill="#e0e0e0"/></svg>
<svg class="a" style="left:1020.9px;top:86.3px;" width="5" height="6" viewBox="0 0 5 6"><path d="M1 0.8L4 3L1 5.2Z" fill="#d0d0d0"/></svg>
<svg class="a" style="left:1031px;top:84.3px;" width="10" height="10" viewBox="0 0 10 10"><path d="M1.5 1.8H8.5L5 8.5Z" fill="none" stroke="#e98b3a" stroke-width="1.5" stroke-linejoin="round"/></svg>
<div class="t" style="left:1044.7px;top:85.0px;color:#dadada;font-size:7.5px;">Cylinder.001</div>
<svg class="a" style="left:1101px;top:84.3px;" width="10" height="10" viewBox="0 0 10 10"><g opacity="1"><path d="M2 2.5H8L5 8Z" fill="none" stroke="#3aa97f" stroke-width="0.9"/><circle cx="2" cy="2.5" r="1.2" fill="#3aa97f"/><circle cx="8" cy="2.5" r="1.2" fill="#3aa97f"/><circle cx="5" cy="8" r="1.2" fill="#3aa97f"/></g></svg>
<svg class="a" style="left:1169.3px;top:85.3px;" width="10" height="8" viewBox="0 0 10 8"><path d="M1 4Q5 0 9 4Q5 8 1 4Z" fill="none" stroke="#e0e0e0" stroke-width="1"/><circle cx="5" cy="4" r="1.5" fill="#e0e0e0"/></svg>
<svg class="a" style="left:1181.8px;top:84.8px;" width="10" height="9" viewBox="0 0 10 9"><rect x="1" y="2.3" width="8" height="6" rx="1" fill="#e0e0e0"/><rect x="3" y="1" width="4" height="2" fill="#e0e0e0"/><circle cx="5" cy="5.3" r="1.7" fill="#2b2b2b"/><circle cx="5" cy="5.3" r="0.8" fill="#e0e0e0"/></svg>
<svg class="a" style="left:1020.9px;top:98.6px;" width="5" height="6" viewBox="0 0 5 6"><path d="M1 0.8L4 3L1 5.2Z" fill="#8aa0cc"/></svg>
<div class="a" style="left:1030px;top:95.6px;width:12px;height:11.5px;background:#6f7fa6;border-radius:2.5px"></div>
<svg class="a" style="left:1031px;top:96.6px;" width="10" height="10" viewBox="0 0 10 10"><path d="M1.5 1.8H8.5L5 8.5Z" fill="none" stroke="#9aa6c6" stroke-width="1.5" stroke-linejoin="round"/></svg>
<div class="t" style="left:1044.7px;top:97.3px;color:#7b93c4;font-size:7.5px;">Cylinder.002</div>
<svg class="a" style="left:1099px;top:96.6px;" width="10" height="10" viewBox="0 0 10 10"><g opacity="0.6"><path d="M2 2.5H8L5 8Z" fill="none" stroke="#6a8ac0" stroke-width="0.9"/><circle cx="2" cy="2.5" r="1.2" fill="#6a8ac0"/><circle cx="8" cy="2.5" r="1.2" fill="#6a8ac0"/><circle cx="5" cy="8" r="1.2" fill="#6a8ac0"/></g></svg>
<svg class="a" style="left:1169px;top:98.6px;" width="10" height="6" viewBox="0 0 10 6"><path d="M1 1.5Q5 5.5 9 1.5" stroke="#9ab0dc" stroke-width="0.9" fill="none"/></svg>
<svg class="a" style="left:1181.8px;top:97.1px;" width="10" height="9" viewBox="0 0 10 9"><rect x="1" y="2.3" width="8" height="6" rx="1" fill="none" stroke="#9ab0dc" stroke-width="0.9"/><path d="M3.5 4L6.5 7M6.5 4L3.5 7" stroke="#9ab0dc" stroke-width="0.8"/></svg>
<svg class="a" style="left:1020.9px;top:111.1px;" width="5" height="6" viewBox="0 0 5 6"><path d="M1 0.8L4 3L1 5.2Z" fill="#d0d0d0"/></svg>
<svg class="a" style="left:1031px;top:109.1px;" width="10" height="10" viewBox="0 0 10 10"><path d="M1.5 1.8H8.5L5 8.5Z" fill="none" stroke="#e98b3a" stroke-width="1.5" stroke-linejoin="round"/></svg>
<div class="t" style="left:1044.7px;top:109.8px;color:#dadada;font-size:7.5px;">Plane</div>
<svg class="a" style="left:1076.5px;top:109.1px;" width="10" height="10" viewBox="0 0 10 10"><g opacity="1"><path d="M2 2.5H8L5 8Z" fill="none" stroke="#3aa97f" stroke-width="0.9"/><circle cx="2" cy="2.5" r="1.2" fill="#3aa97f"/><circle cx="8" cy="2.5" r="1.2" fill="#3aa97f"/><circle cx="5" cy="8" r="1.2" fill="#3aa97f"/></g></svg>
<svg class="a" style="left:1169.3px;top:110.1px;" width="10" height="8" viewBox="0 0 10 8"><path d="M1 4Q5 0 9 4Q5 8 1 4Z" fill="none" stroke="#e0e0e0" stroke-width="1"/><circle cx="5" cy="4" r="1.5" fill="#e0e0e0"/></svg>
<svg class="a" style="left:1181.8px;top:109.6px;" width="10" height="9" viewBox="0 0 10 9"><rect x="1" y="2.3" width="8" height="6" rx="1" fill="#e0e0e0"/><rect x="3" y="1" width="4" height="2" fill="#e0e0e0"/><circle cx="5" cy="5.3" r="1.7" fill="#2b2b2b"/><circle cx="5" cy="5.3" r="0.8" fill="#e0e0e0"/></svg>
<div class="a" style="left:992.6px;top:218px;width:207.4px;height:2.4px;background:#161616;"></div>
<div class="a" style="left:992.6px;top:220.4px;width:207.4px;height:427.6px;background:#2d2d2d;"></div>
<div class="a" style="left:992.6px;top:236px;width:16.7px;height:412px;background:#1f1f1f;"></div>
<div class="a" style="left:999px;top:222.5px;width:18px;height:11px;background:#232323;border-radius:2.5px"></div>
<svg class="a" style="left:999.5px;top:222.5px;" width="11" height="11" viewBox="0 0 11 11"><rect x="1" y="1.3" width="8.5" height="3.6" rx="1.8" fill="#e0e0e0"/><rect x="1" y="6" width="8.5" height="3.6" rx="1.8" fill="#e0e0e0"/><circle cx="3" cy="3.1" r="1.1" fill="#444"/><circle cx="7.5" cy="7.8" r="1.1" fill="#444"/></svg>
<svg class="a" style="left:1010.2px;top:225px;" width="6" height="6" viewBox="0 0 6 6"><path d="M0.8 1.9L3 4.1L5.2 1.9" stroke="#bdbdbd" stroke-width="1" fill="none"/></svg>
<div class="a" style="left:1061.7px;top:222px;width:70px;height:10.9px;background:#1d1d1d;border-radius:2.5px"></div>
<svg class="a" style="left:1063.5px;top:222.5px;" width="11" height="11" viewBox="0 0 11 11"><circle cx="6" cy="4.2" r="2.7" fill="none" stroke="#d8d8d8" stroke-width="1"/><path d="M4.1 6.2L1.3 9" stroke="#d8d8d8" stroke-width="1.2"/></svg>
<div class="a" style="left:1183.4px;top:222px;width:11.4px;height:11px;background:#262626;border-radius:2.5px"></div>
<svg class="a" style="left:1186px;top:224.8px;" width="6" height="6" viewBox="0 0 6 6"><path d="M0.8 1.9L3 4.1L5.2 1.9" stroke="#bdbdbd" stroke-width="1" fill="none"/></svg>
<svg class="a" style="left:1015.5px;top:242.6px;" width="11" height="10" viewBox="0 0 11 10"><rect x="3" y="2.8" width="5" height="5" fill="#e8e8e8"/><path d="M1 3V1H3M8 1H10V3M10 7V9H8M3 9H1V7" stroke="#bdbdbd" stroke-width="0.9" fill="none"/></svg>
<div class="t" style="left:1031.1px;top:243.1px;color:#e0e0e0;font-size:7.5px;">Cylinder.002</div>
<svg class="a" style="left:1183.5px;top:242px;" width="11" height="11" viewBox="0 0 11 11"><path d="M5.5 2.5L9 6M6.5 1.5L9.8 4.8M4 5.5L6.5 8L8 4Z M5 7L1.5 10" stroke="#9a9a9a" stroke-width="0.9" fill="none"/></svg>
<div class="a" style="left:1015.4px;top:264px;width:179.4px;height:11.9px;background:#545454;border-radius:2.5px"></div>
<div class="t" style="left:1019.7px;top:265.1px;color:#e0e0e0;font-size:9.5px;">+</div>
<div class="t" style="left:1088.9px;top:265.3px;color:#e0e0e0;font-size:7.5px;">Add Modifier</div>
<div class="a" style="left:993px;top:396.5px;width:16.3px;height:15.8px;background:#303030;border-radius:3px 0 0 3px"></div>
<div style="opacity:0.85">
<svg class="a" style="left:993.3px;top:243.8px;" width="16" height="12" viewBox="0 0 16 12"><path d="M5.5 4V10" stroke="#dcdcdc" stroke-width="1.6"/><circle cx="5.5" cy="9.5" r="1.3" fill="#dcdcdc"/><path d="M8.5 2.5Q9 6 10.5 6Q12 6 12.5 2.5M10.5 6V11" stroke="#dcdcdc" stroke-width="1.3" fill="none"/></svg>
</div>
<div style="opacity:0.85">
<svg class="a" style="left:993.3px;top:266px;" width="16" height="12" viewBox="0 0 16 12"><rect x="3.5" y="3.5" width="9" height="7" fill="none" stroke="#d8d8d8" stroke-width="1"/><rect x="5.5" y="2" width="3.5" height="2" fill="#d8d8d8"/></svg>
</div>
<div style="opacity:0.85">
<svg class="a" style="left:993.3px;top:284px;" width="16" height="12" viewBox="0 0 16 12"><rect x="3.5" y="2" width="9" height="3" fill="#d8d8d8"/><rect x="4.5" y="5" width="7" height="5.5" fill="none" stroke="#d8d8d8" stroke-width="1"/></svg>
</div>
<div style="opacity:0.85">
<svg class="a" style="left:993.3px;top:301px;" width="16" height="12" viewBox="0 0 16 12"><rect x="4" y="3" width="8.5" height="7.5" fill="none" stroke="#c8c8c8" stroke-width="1"/><path d="M5 9.5L9.5 4.5L11.5 9.5Z" fill="#d8d8d8"/></svg>
</div>
<div style="opacity:0.85">
<svg class="a" style="left:993.3px;top:318px;" width="16" height="12" viewBox="0 0 16 12"><path d="M3.5 10L6.5 3.5L9 10Z" fill="#d8d8d8"/><circle cx="10.5" cy="8" r="2.3" fill="none" stroke="#d8d8d8" stroke-width="1"/><circle cx="11.5" cy="3" r="1" fill="#d8d8d8"/></svg>
</div>
<div style="opacity:0.85">
<svg class="a" style="left:993.3px;top:336px;" width="16" height="12" viewBox="0 0 16 12"><circle cx="8" cy="6.3" r="4.2" fill="#7a2a3a"/><path d="M5 4Q8 6 11 5M7 2.5Q6 6.5 8.5 10.2" stroke="#e06a80" stroke-width="0.9" fill="none"/></svg>
</div>
<div style="opacity:0.85">
<svg class="a" style="left:993.3px;top:358px;" width="16" height="12" viewBox="0 0 16 12"><rect x="3.5" y="2" width="9" height="2.2" fill="#d8d8d8"/><rect x="4.2" y="4.8" width="7.6" height="5.5" fill="none" stroke="#d8d8d8" stroke-width="1"/><rect x="6.5" y="5.8" width="3" height="1" fill="#d8d8d8"/></svg>
</div>
<div style="opacity:0.85">
<svg class="a" style="left:993.3px;top:381.4px;" width="16" height="12" viewBox="0 0 16 12"><rect x="5" y="3.5" width="6" height="6" fill="#e3b26e"/><path d="M3.5 4V2H5.5M10.5 2H12.5V4M12.5 9V11H10.5M5.5 11H3.5V9" stroke="#e98b3a" stroke-width="0.9" fill="none"/></svg>
</div>
<div style="opacity:0.85">
<svg class="a" style="left:993.3px;top:398.4px;" width="16" height="12" viewBox="0 0 16 12"><path d="M4 10L9 5" stroke="#7aa0e8" stroke-width="2"/><circle cx="10" cy="4" r="2.6" fill="#7aa0e8"/><circle cx="11" cy="3" r="1.2" fill="#303030"/></svg>
</div>
<div style="opacity:0.85">
<svg class="a" style="left:993.3px;top:415.5px;" width="16" height="12" viewBox="0 0 16 12"><path d="M4 3L11.5 9.5M4 3V10M4 3H10" stroke="#8aa0e0" stroke-width="0.9" fill="none"/><circle cx="4" cy="3" r="1.3" fill="#c8d4f0"/><circle cx="11.5" cy="9.5" r="1.3" fill="#8aa0e0"/></svg>
</div>
<div style="opacity:0.85">
<svg class="a" style="left:993.3px;top:433.6px;" width="16" height="12" viewBox="0 0 16 12"><circle cx="8" cy="6.5" r="3.8" fill="none" stroke="#6a7fd0" stroke-width="1.1"/><circle cx="8" cy="6.5" r="1.6" fill="#c8d4f0"/></svg>
</div>
<div style="opacity:0.85">
<svg class="a" style="left:993.3px;top:450.7px;" width="16" height="12" viewBox="0 0 16 12"><circle cx="6.8" cy="7" r="3" fill="none" stroke="#6a8fd0" stroke-width="1.1"/><circle cx="9.5" cy="5" r="3" fill="none" stroke="#6a8fd0" stroke-width="1.1"/></svg>
</div>
<div style="opacity:0.85">
<svg class="a" style="left:993.3px;top:468.9px;" width="16" height="12" viewBox="0 0 16 12"><path d="M4 3H12L8 10Z" fill="none" stroke="#3aa97f" stroke-width="1"/><circle cx="4" cy="3" r="1.1" fill="#3aa97f"/><circle cx="12" cy="3" r="1.1" fill="#3aa97f"/><circle cx="8" cy="10" r="1.1" fill="#3aa97f"/></svg>
</div>
<div style="opacity:0.85">
<svg class="a" style="left:993.3px;top:487px;" width="16" height="12" viewBox="0 0 16 12"><circle cx="8" cy="6.3" r="4.2" fill="#c04a5a"/><path d="M8 2.1A4.2 4.2 0 0 1 12.2 6.3H8Z" fill="#2a2a2a"/><path d="M3.8 6.3H8V10.5A4.2 4.2 0 0 1 3.8 6.3Z" fill="#2a2a2a"/></svg>
</div>
<div style="opacity:0.85">
<svg class="a" style="left:993.3px;top:508.6px;" width="16" height="12" viewBox="0 0 16 12"><rect x="4" y="2.5" width="8" height="8" fill="#c04a5a"/><path d="M4 2.5H6V4.5H4ZM8 2.5H10V4.5H8ZM6 4.5H8V6.5H6ZM10 4.5H12V6.5H10ZM4 6.5H6V8.5H4ZM8 6.5H10V8.5H8ZM6 8.5H8V10.5H6ZM10 8.5H12V10.5H10Z" fill="#3a2a2e"/></svg>
</div>
</body></html>
